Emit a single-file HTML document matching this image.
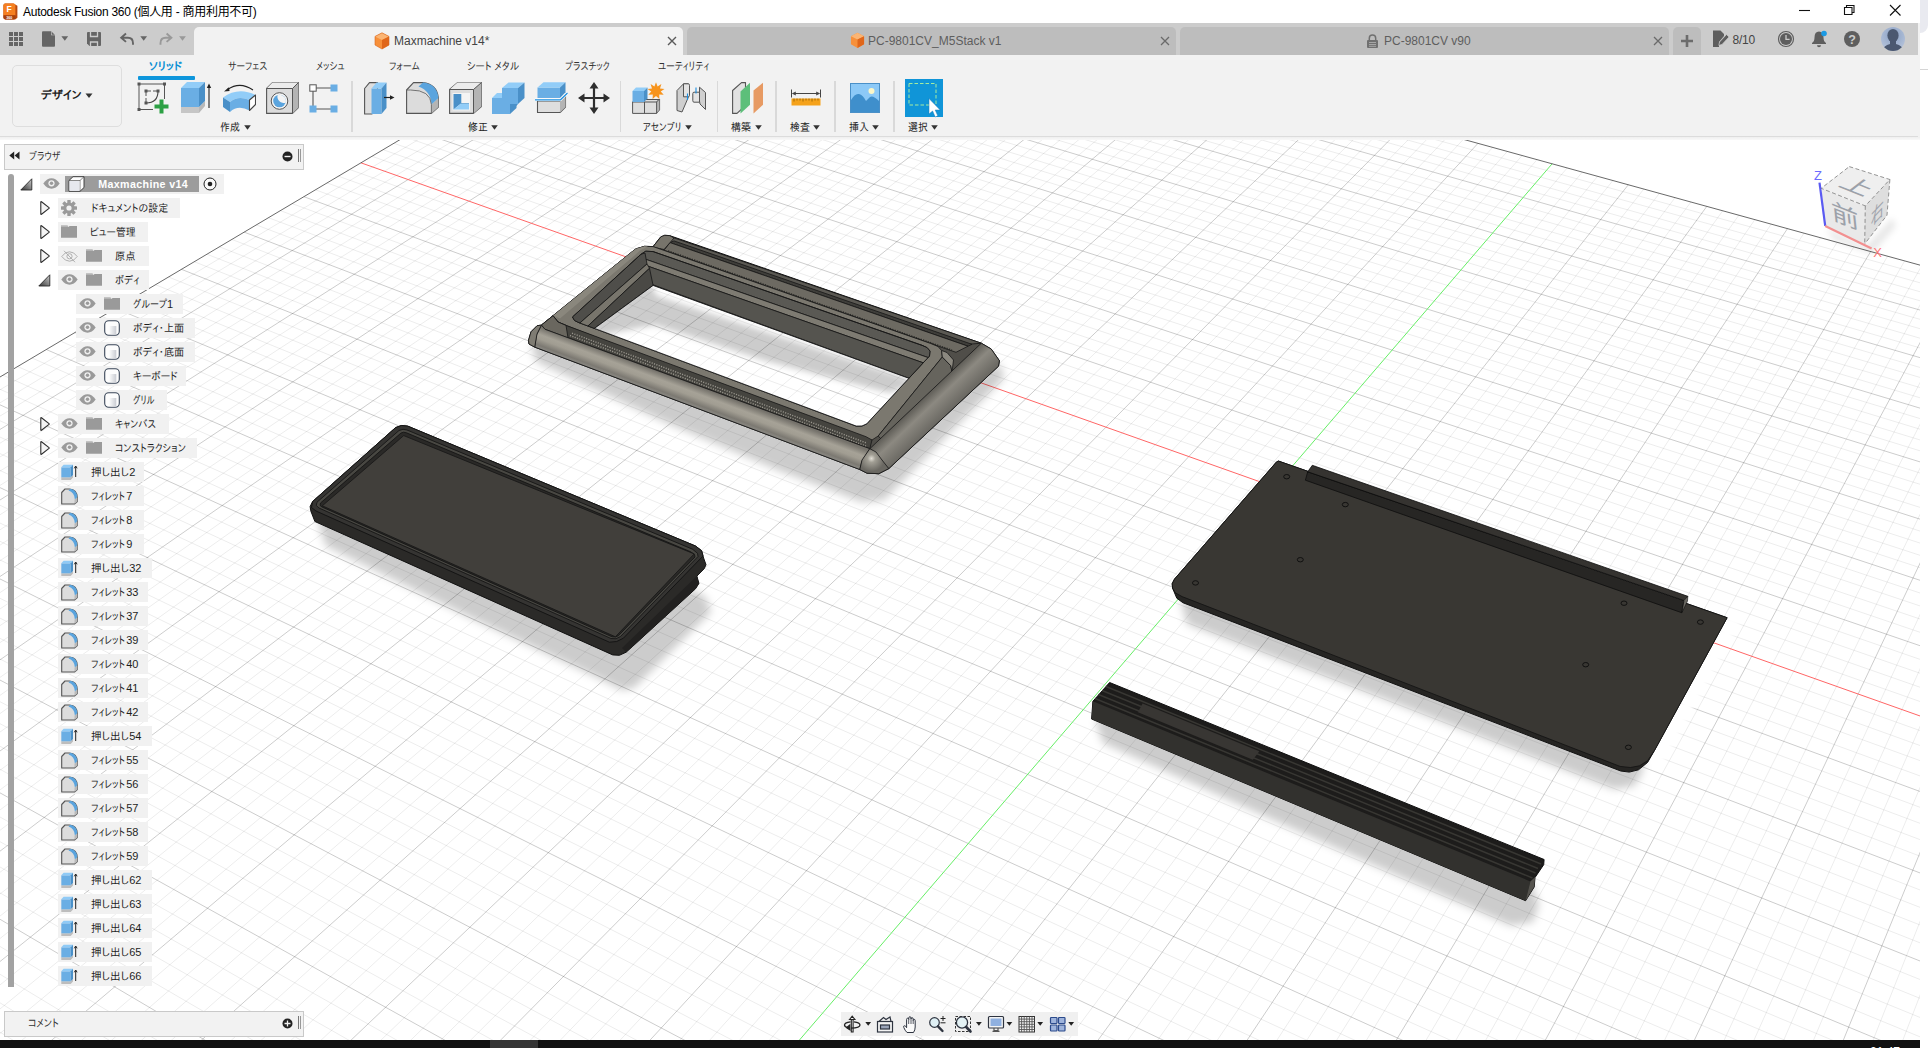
<!DOCTYPE html><html lang="ja"><head><meta charset="utf-8"><title>Autodesk Fusion 360</title><style>
html,body{margin:0;padding:0}
body{width:1928px;height:1048px;overflow:hidden;background:#fff;position:relative;font-family:"Liberation Sans","IPAPGothic","IPAGothic","Noto Sans CJK JP",sans-serif;font-size:12px;color:#222}
#vp{position:absolute;left:0;top:0}
.abs{position:absolute}
.tabt{font-size:12px;line-height:16px;white-space:nowrap;font-family:"Liberation Sans",sans-serif}
.jp{font-family:"Liberation Sans","IPAPGothic","IPAGothic","Noto Sans CJK JP",sans-serif;white-space:nowrap}
.rt{top:59px;font-size:12px;line-height:14px;color:#333;letter-spacing:-.8px}
.sep{top:81px;width:1.500px;height:51px;background:#d9d9d9}
.gl{top:119px;font-size:12px;line-height:14px;color:#222;letter-spacing:-.2px}
.gl i{display:inline-block;width:0;height:0;border-left:3.500px solid transparent;border-right:3.500px solid transparent;border-top:4.500px solid #333;margin-left:3px;vertical-align:2px}
.k{display:inline-block;transform-origin:0 50%;white-space:pre}
.rb{height:19.600px;background:#f1f1f1}
.jt{overflow:visible;font-family:"Liberation Sans","IPAPGothic","IPAGothic","Noto Sans CJK JP",sans-serif}

</style></head><body>
<svg id="vp" width="1920" height="1048" viewBox="0 0 1920 1048">
<defs>
<filter id="blur6" x="-10%" y="-20%" width="120%" height="140%"><feGaussianBlur stdDeviation="5"/></filter>
<filter id="blur4" x="-10%" y="-20%" width="120%" height="140%"><feGaussianBlur stdDeviation="4"/></filter>
<filter id="blur2" x="-20%" y="-20%" width="140%" height="140%"><feGaussianBlur stdDeviation="3"/></filter>
<filter id="blur2s" x="-30%" y="-10%" width="160%" height="120%"><feGaussianBlur stdDeviation="2"/></filter>
</defs>

<g id="gridg"><path d="M748.3 -57.7L-635.6 769.9M759.2 -54.7L-623 778.3M770.1 -51.7L-610.2 786.7M792.1 -45.6L-584.4 803.8M803.1 -42.6L-571.4 812.4M814.3 -39.5L-558.2 821.1M825.4 -36.4L-544.9 829.9M847.9 -30.2L-518 847.7M859.3 -27.1L-504.4 856.7M870.7 -24L-490.6 865.8M882.1 -20.8L-476.8 875M905.2 -14.4L-448.7 893.5M916.8 -11.2L-434.5 902.9M928.5 -8L-420.2 912.4M940.3 -4.8L-405.8 922M963.9 1.7L-376.5 941.3M975.8 5L-361.6 951.2M987.8 8.3L-346.7 961.1M999.9 11.6L-331.6 971M1024.1 18.3L-301 991.3M1036.4 21.7L-285.5 1001.5M1048.6 25.1L-269.8 1011.9M1061 28.5L-254.1 1022.3M1085.9 35.3L-222.1 1043.5M1098.4 38.8L-205.8 1054.2M1111 42.3L-189.5 1065.1M1123.7 45.7L-173 1076M1149.3 52.8L-139.5 1098.1M1162.1 56.3L-122.5 1109.4M1175.1 59.9L-105.3 1120.7M1188.1 63.5L-88 1132.2M1214.3 70.7L-52.9 1155.4M1227.5 74.3L-35.1 1167.2M1240.8 78L-17.1 1179.1M1254.2 81.7L1 1191.1M1281.1 89.1L37.9 1215.5M1294.7 92.8L56.6 1227.8M1308.3 96.6L75.4 1240.3M1322 100.4L94.5 1252.9M1349.7 108L133.2 1278.5M1363.6 111.8L152.8 1291.5M1377.7 115.7L172.7 1304.6M1391.8 119.6L192.7 1317.9M1420.2 127.4L233.4 1344.8M1434.5 131.4L254.1 1358.5M1448.9 135.3L275 1372.3M1463.4 139.3L296.1 1386.3M1492.7 147.4L338.9 1414.6M1507.4 151.4L360.7 1429M1522.2 155.5L382.7 1443.6M1537.1 159.6L405 1458.3M1567.2 167.9L450.2 1488.2M1582.3 172.1L473.1 1503.4M1597.6 176.3L496.4 1518.8M1612.9 180.5L519.8 1534.3M1643.8 189L567.6 1565.9M1659.4 193.3L591.9 1582M1675.1 197.6L616.4 1598.2M1690.9 202L641.2 1614.6M1722.7 210.8L691.8 1648.1M1738.8 215.2L717.4 1665.1M1754.9 219.6L743.4 1682.2M1771.2 224.1L769.7 1699.6M1804 233.1L823.2 1735M1820.5 237.7L850.5 1753.1M1837.1 242.3L878 1771.3M1853.9 246.9L905.9 1789.7M1887.6 256.2L962.7 1827.3M1904.7 260.9L991.6 1846.4M1921.8 265.6L1020.9 1865.8M1939.1 270.4L1050.5 1885.4M1973.9 279.9L1110.9 1925.4M1991.4 284.8L1141.7 1945.7M2009.1 289.6L1172.8 1966.3M2026.9 294.5L1204.4 1987.2M2062.8 304.4L1268.7 2029.8M2080.9 309.4L1301.5 2051.5M2099.1 314.4L1334.7 2073.4M2117.4 319.5L1368.4 2095.7M2154.4 329.7L1437.1 2141.1M2173.1 334.8L1472.1 2164.3M2191.9 340L1507.6 2187.8M2210.9 345.2L1543.6 2211.6M2249.1 355.8L1617.1 2260.2M2268.4 361.1L1654.6 2285M729.5 -55.9L2265.6 369.6M721.5 -51.1L2262.9 378.3M713.4 -46.3L2260.1 387M705.2 -41.5L2257.3 395.8M688.6 -31.6L2251.5 413.8M680.3 -26.7L2248.6 422.9M671.8 -21.7L2245.7 432.1M663.3 -16.6L2242.7 441.5M646.1 -6.4L2236.7 460.4M637.4 -1.2L2233.6 470M628.6 4L2230.5 479.8M619.7 9.2L2227.3 489.6M601.8 19.9L2221 509.6M592.7 25.3L2217.7 519.8M583.6 30.7L2214.4 530.1M574.3 36.2L2211.1 540.5M555.6 47.3L2204.3 561.7M546.2 52.9L2200.9 572.5M536.6 58.6L2197.4 583.4M527 64.3L2193.9 594.5M507.5 75.9L2186.7 617M497.6 81.7L2183.1 628.4M487.6 87.6L2179.4 640M477.6 93.6L2175.6 651.7M457.2 105.7L2168 675.6M446.9 111.8L2164.1 687.8M436.5 118L2160.2 700.1M426 124.2L2156.2 712.6M404.7 136.9L2148.1 738M393.9 143.3L2144 751M383 149.7L2139.8 764.1M372 156.3L2135.5 777.4M349.7 169.5L2126.9 804.5M338.4 176.2L2122.5 818.4M327 182.9L2118 832.4M315.5 189.8L2113.5 846.6M292.2 203.6L2104.2 875.6M280.3 210.6L2099.5 890.4M268.4 217.7L2094.7 905.4M256.3 224.9L2089.9 920.6M231.8 239.4L2080 951.6M219.4 246.8L2074.9 967.5M206.9 254.2L2069.8 983.6M194.2 261.7L2064.6 999.9M168.5 277L2053.9 1033.2M155.5 284.7L2048.5 1050.3M142.3 292.5L2043 1067.6M129 300.4L2037.4 1085.1M102 316.5L2025.9 1121.1M88.3 324.6L2020 1139.4M74.4 332.8L2014.1 1158.1M60.4 341.1L2008.1 1177M32 358L1995.7 1215.8M17.6 366.5L1989.3 1235.7M3 375.2L1982.9 1255.8M-11.7 384L1976.4 1276.3M-41.7 401.7L1963 1318.3M-56.9 410.8L1956.1 1339.9M-72.3 419.9L1949.1 1361.8M-87.9 429.1L1942 1384M-119.5 447.9L1927.5 1429.7M-135.5 457.4L1920 1453.1M-151.8 467L1912.4 1476.9M-168.2 476.8L1904.6 1501.2M-201.6 496.6L1888.8 1551M-218.6 506.7L1880.6 1576.5M-235.8 516.9L1872.3 1602.6M-253.2 527.2L1863.8 1629.1M-288.6 548.2L1846.4 1683.6M-306.5 558.9L1837.5 1711.6M-324.8 569.7L1828.4 1740.2M-343.2 580.6L1819.1 1769.3M-380.7 602.9L1800 1829.3M-399.8 614.2L1790.1 1860.2M-419.1 625.7L1780.1 1891.7M-438.7 637.3L1769.8 1923.8M-478.5 660.9L1748.7 1990.1M-498.8 672.9L1737.8 2024.3M-519.3 685.1L1726.6 2059.2M-540.1 697.5L1715.3 2094.8M-582.5 722.6L1691.8 2168.4M-604.1 735.5L1679.7 2206.4M-626 748.4L1667.3 2245.3M-648.2 761.6L1654.6 2285" stroke="#000" stroke-opacity=".075" stroke-width="1" fill="none"/>
<path d="M781 -48.7L-597.4 795.2M836.7 -33.3L-531.5 838.8M893.6 -17.6L-462.8 884.2M952.1 -1.5L-391.2 931.6M1012 15L-316.4 981.1M1073.4 31.9L-238.1 1032.9M1136.4 49.3L-156.3 1087M1201.1 67.1L-70.6 1143.7M1267.6 85.4L19.4 1203.2M1335.8 104.2L113.7 1265.7M1405.9 123.5L213 1331.3M1478 143.3L317.4 1400.4M1628.3 184.8L543.6 1550M1706.8 206.4L666.4 1631.3M1787.5 228.6L796.3 1717.2M1870.7 251.5L934.1 1808.4M1956.4 275.1L1080.5 1905.3M2044.8 299.5L1236.3 2008.3M2135.9 324.6L1402.5 2118.3M2229.9 350.5L1580.1 2235.8M696.9 -36.6L2254.4 404.8M654.7 -11.5L2239.7 450.9M610.8 14.5L2224.2 499.6M565 41.7L2207.7 551.1M517.3 70L2190.3 605.7M467.4 99.6L2171.8 663.6M415.4 130.5L2152.2 725.2M303.9 196.7L2108.9 861M244.1 232.1L2084.9 936M181.4 269.3L2059.3 1016.4M115.6 308.4L2031.7 1103M46.3 349.5L2001.9 1196.3M-26.6 392.8L1969.7 1297.2M-103.6 438.4L1934.8 1406.6M-184.8 486.7L1896.8 1525.8M-270.8 537.6L1855.2 1656.1M-361.8 591.7L1809.6 1799M-458.4 649L1759.3 1956.6M-561.2 710L1703.7 2131.2" stroke="#000" stroke-opacity=".2" stroke-width="1" fill="none"/>
<g filter="url(#blur2s)"><polygon points="1729,617 1740,622 1660,768 1646,764" fill="#fff"/></g>
<path d="M360.9 162.8L2131.2 790.9" stroke="#f66" stroke-width="1" fill="none"/>
<path d="M1552.1 163.8L427.4 1473.2" stroke="#6e6" stroke-width="1" fill="none"/>
<path d="M737.5 -60.6L-648.2 761.6M737.5 -60.6L2268.4 361.1" stroke="#444" stroke-opacity=".8" stroke-width="1" fill="none"/></g>
<g filter="url(#blur4)" fill="#000" fill-opacity=".2"><polygon points="560,330 531,346 537,362 668,423.5 780,471 862,502 884,500 1004,378 1000,364 960,380 880,450"/></g>
<polygon points="528.5,340.4 531,331.8 537.1,325.7 541.4,325.1 630.5,253 636,248.8 644.6,246.3 653.1,246.6 660.4,237.2 664.7,235.3 669.6,235.6 981.3,343.2 991.2,349 999.4,360.7 998.5,366.2 888.8,468.6 878.8,473.7 867,473.2 859.8,469.5 534.7,347.1 529,344" fill="#504e49" stroke="#111" stroke-width="1" />
<polygon points="668,235.8 981.3,343.2 940,346.7 655.3,247.2" fill="#5b5953" stroke="#161616" stroke-width="0.8" />
<polygon points="674,240.9 972,344.3 968,346.2 670,242.6" fill="#3f3e3a" stroke="#161616" stroke-width="0.8" />
<polygon points="670,242.6 968,346.2 956,352.3 664,250.2" fill="#6d6a62" stroke="#161616" stroke-width="0.8" />
<path d="M668 251L952 350.3" stroke="#2a2a27" stroke-width="1.6" stroke-dasharray="1.3 1.2" fill="none"/>
<polygon points="661,236.7 664.7,235.3 669.6,235.6 674,238 664,249.5 655.3,247.6 653.1,246.6" fill="#77746b" stroke="#161616" stroke-width="0.8" />
<path d="M553 315.7 L630.5 253 L636 248.8 L644.6 246.3 L653.1 246.6 L930.5 343.4 L938 346.5 L941.6 350.5 L942.3 357 L878.2 436 L872 440 L862 440.8 L566 325.4 L558 322Z M572.5 317 L640.9 254.3 L645.8 251.2 L653.1 251.6 L922 345.3 L927 347.6 L930 351 L929.5 356 L866.8 423.8 L862 426 L856.2 426.1 L579 322.7 L574.5 320.5Z" fill="#7b786f" fill-rule="evenodd" stroke="#161616" stroke-width=".8"/>
<polygon points="553,315.7 630.5,253 636,248.8 644.6,246.3 648,246.4 640,250.5 634,256 560,318.5" fill="#8a877d" stroke="none" stroke-width="0.8" />
<clipPath id="r1clip"><polygon points="572.5,317 640.9,254.3 645.8,251.2 653.1,251.6 922,345.3 927,347.6 930,351 929.5,356 866.8,423.8 862,426 856.2,426.1 579,322.7 574.5,320.5"/></clipPath>
<g clip-path="url(#r1clip)">
<rect x="560" y="240" width="400" height="200" fill="#4a4945"/>
<polygon points="636,245.5 940,351.6 940,361.7 640,257.3" fill="#5a5954" stroke="#161616" stroke-width="0.8" />
<polygon points="640,257.3 940,361.7 940,368.7 642,264.1" fill="#7e7b72" stroke="#161616" stroke-width="0.8" />
<polygon points="642,264.1 940,368.7 940,389.6 650,283.7" fill="#55544f" stroke="#161616" stroke-width="0.8" />
<polygon points="558.8,328.2 640.9,254.3 645,253 647,264 567.8,333.6" fill="#4f4e4a" stroke="#161616" stroke-width="0.8" />
<polygon points="567.8,333.6 647,264 649.5,268.3 577.6,335.7" fill="#78756c" stroke="#161616" stroke-width="0.8" />
<polygon points="577.6,335.7 649.5,268.3 653.1,285.4 584.2,335.9" fill="#4a4945" stroke="#161616" stroke-width="0.8" />
<clipPath id="holeclip"><polygon points="653.1,285.4 940,389.6 940,440 560,440 584.2,335.9"/></clipPath>
<g clip-path="url(#holeclip)"><rect x="560" y="260" width="400" height="200" fill="#fff"/><use href="#gridg"/><g filter="url(#blur2)"><polygon points="650,284 657,296 905,378 912,384 890,393 766,361 655,325 600,335 590,326" fill="#000" fill-opacity=".2"/></g></g>
<path d="M584.2 335.9L653.1 285.4L940 389.6" fill="none" stroke="#161616" stroke-width=".9"/>
</g>
<polygon points="572.5,317 640.9,254.3 645.8,251.2 653.1,251.6 922,345.3 927,347.6 930,351 929.5,356 866.8,423.8 862,426 856.2,426.1 579,322.7 574.5,320.5" fill="none" stroke="#161616" stroke-width=".9"/>
<polygon points="541.4,325.1 553,315.7 558,322 566,325.4 866,436.7 872,440 869.8,448.7 545,329.3" fill="#45443f" stroke="#161616" stroke-width="0.8" />
<path d="M572 333.2L866 442.8 M570 335.5L866 446" stroke="#9a978e" stroke-width="1.4" stroke-dasharray="1.1 1.4" fill="none"/>
<defs><linearGradient id="cyl" gradientUnits="userSpaceOnUse" x1="640" y1="364.8" x2="631.4" y2="387.7"><stop offset="0" stop-color="#75726b"/><stop offset=".28" stop-color="#a6a297"/><stop offset=".45" stop-color="#a19d92"/><stop offset=".7" stop-color="#7c7972"/><stop offset=".88" stop-color="#8f8e89"/><stop offset="1" stop-color="#6c6b67"/></linearGradient><linearGradient id="slope" gradientUnits="userSpaceOnUse" x1="925" y1="396" x2="944" y2="416"><stop offset="0" stop-color="#5d5b55"/><stop offset=".4" stop-color="#8c8981"/><stop offset="1" stop-color="#6b6963"/></linearGradient><radialGradient id="ball" gradientUnits="userSpaceOnUse" cx="871.5" cy="458.5" r="13"><stop offset="0" stop-color="#e2dfd6"/><stop offset=".3" stop-color="#a29f95"/><stop offset="1" stop-color="#6a6862"/></radialGradient></defs>
<polygon points="541.4,325.1 553,315.7 558,322 566,325.4 568,337.9 545,329.3" fill="#6a675f" stroke="#161616" stroke-width="0.8" />
<polygon points="541.4,325.1 545,329.3 869.8,448.7 862,461 859.8,469.5 534.7,347.1 536.5,335" fill="url(#cyl)" stroke="#161616" stroke-width="0.8" />
<polygon points="528.5,340.4 531,331.8 537.1,325.7 541.4,325.1 537,334 534.7,347.1 529,344" fill="#7f7c73" stroke="#161616" stroke-width="0.8" />
<polygon points="942.3,357 950.8,365.8 952,372 884,442 878.2,436" fill="#66645d" stroke="#161616" stroke-width="0.8" />
<polygon points="941.6,350.5 947,352.5 953.5,360 952,372 950.8,365.8 942.3,357" fill="#8c8980" stroke="#161616" stroke-width="0.8" />
<polygon points="981.3,343.2 991.2,349 999.4,360.7 998.5,366.2 888.8,468.6 880,462 874,452 869.8,448.7" fill="url(#slope)" stroke="#161616" stroke-width="0.8" />
<polygon points="869.8,448.7 876,452 882,460 888.8,468.6 878.8,473.7 867,473.2 859.8,469.5 862,460" fill="url(#ball)" stroke="#161616" stroke-width="0.8" />
<!-- TRAY shadow -->
<g filter="url(#blur4)" fill="#000" fill-opacity=".2"><polygon points="340,500 318,522 326,546 467,616 594,676 622,690 634,688 711,612 706,598 694,590 640,600"/></g>
<!-- TRAY -->
<path d="M395.6 427.6 L401.4 425.5 L407.7 426.1 L695.5 546 L701.6 550.7 L703.6 558 L706 564.7 L704.2 568.7 L696.9 576.1 L698.9 583.4 L695.5 588.8 L632.8 646.2 L626.1 652.2 L619.4 655.3 L612.7 654.9 L314.9 521.5 L310.9 511.2 L310.1 506.6 L312.6 501.5Z" fill="#2b2a28" stroke="#111" stroke-width="1"/>
<path d="M696.9 576.1 L698.9 583.4 L695.5 588.8 L632.8 646.2 L626.1 652.2 L622 648 Z" fill="#222120"/>
<!-- rim top -->
<path d="M395.6 427.6 L401.4 425.5 L407.7 426.1 L695.5 546 L701.6 550.7 L703 556 L623.4 638.2 L616.7 641.5 L609.4 642.2 L316 511 L311.5 507.5 L312.6 501.5Z" fill="#353432" stroke="#121212" stroke-width=".9"/>
<path d="M399 430.5 L403 429.3 L407 430 L692.5 549.2 L697.5 553.3 L698 556.5 L620.5 636.5 L616 638.7 L611 638.5 L319 508 L316.3 505.5 L317 502.2Z" fill="#484742" stroke="#121212" stroke-width=".8"/>
<path d="M401 433 L403.6 432.2 L406.5 432.8 L690.5 551.7 L694.6 554.6 L695 557 L618.5 635.6 L615.6 637 L612 636.8 L322 507 L320 505.4 L320.5 503Z" fill="#2a2927" stroke="#121212" stroke-width=".8"/>
<path d="M403.7 435.6 L694.2 553.9 L615.4 636.8 L322.3 505.8Z" fill="#413f3b" stroke="#151515" stroke-width=".8"/>

<!-- PLATE shadows -->
<g filter="url(#blur4)" fill="#000" fill-opacity=".2"><polygon points="1200,590 1181,602 1187,624 1250,648.5 1384,699 1584,777.5 1614,789 1634,786 1643,771 1640,740"/></g>
<g filter="url(#blur4)" fill="#000" fill-opacity=".2"><polygon points="1112,700 1096,722 1103,743 1251.5,810 1407,880 1511,925.500 1533,922 1539,904 1530,880"/></g>
<!-- PLATE -->
<path d="M1276.4 462.1 L1278.3 461 L1727.1 617.7 L1654.5 750.4 L1647.6 762.4 L1638.5 769.8 L1629.3 772.1 L1620.7 771 L1182.9 602.7 L1176.8 598.2 L1172.6 588.2 L1172.2 583.7 L1174.5 579.1Z" fill="#262523" stroke="#111" stroke-width="1"/>
<path d="M1276.4 462.1 L1278.3 461 L1727.1 617.7 L1654.5 750.4 L1647.6 760.7 L1639.6 765.8 L1630.4 767.5 L1620.1 766.4 L1182.1 596.6 L1175.3 592.8 L1172.6 588.2 L1172.2 583.7 L1174.5 579.1Z" fill="#393733" stroke="#111" stroke-width=".8"/>
<g fill="none" stroke="#0c0c0c" stroke-width=".9">
<ellipse cx="1286.7" cy="476.7" rx="3" ry="2.2"/><ellipse cx="1345.3" cy="504.6" rx="3" ry="2.2"/><ellipse cx="1300.3" cy="559.7" rx="3" ry="2.2"/>
<ellipse cx="1195.5" cy="582.9" rx="3" ry="2.2"/><ellipse cx="1624" cy="603.2" rx="3" ry="2.2"/><ellipse cx="1700.4" cy="622.1" rx="3" ry="2.2"/>
<ellipse cx="1585.7" cy="664.7" rx="3" ry="2.2"/><ellipse cx="1628.4" cy="747.3" rx="3" ry="2.2"/>
</g>
<!-- ridge on plate -->
<path d="M1307.7 471.8 L1305.4 480.2 L1681.7 612.7 L1684 600.5Z" fill="#272624" stroke="#0e0e0e" stroke-width=".8"/>
<path d="M1312.3 465.3 L1307.7 471.8 L1684 600.5 L1687.8 596.3Z" fill="#353330" stroke="#0e0e0e" stroke-width=".8"/>
<path d="M1684 600.5 L1687.8 596.3 L1687.5 601 L1682 612.5Z" fill="#6a6862" stroke="#0e0e0e" stroke-width=".6"/>
<!-- LONG BAR -->
<path d="M1109.6 682.5 L1544.1 859.5 L1543.7 864.7 L1535 877.5 L1534.2 887 L1525.6 900.7 L1091.6 719 L1092.9 701.3Z" fill="#1d1c1b" stroke="#0e0e0e" stroke-width="1"/>
<path d="M1092.9 701.3 L1530.4 881.4 L1525.6 900.7 L1091.6 719Z" fill="#32312e"/>
<path d="M1530.4 881.4 L1535.1 877.1 L1534.2 886.5 L1525.6 900.7Z" fill="#55534e"/>
<g stroke="#383733" stroke-width="1.5" fill="none">
<path d="M1106 686.5 L1541 864"/><path d="M1102 690.5 L1538 868.5"/><path d="M1098.5 694.5 L1535.5 873"/><path d="M1095 698.5 L1532.5 878"/>
</g>
<path d="M1142.6 703.5 L1259.3 751.3 L1252.8 759.8 L1138 712.2Z" fill="#383633"/>

<!-- view cube -->
<g filter="url(#blur2)"><path d="M1826 228 L1866 246 L1892 218 L1896 226 L1872 254 L1834 240Z" fill="#000" fill-opacity=".09"/></g>
<path d="M1849.300 166.600 L1889.900 179.500 L1865.300 205.900 L1821.200 188.300Z" fill="#efefef"/>
<path d="M1821.200 188.300 L1865.300 205.900 L1864.700 243.900 L1825.200 226.100Z" fill="#e9e9e9"/>
<path d="M1865.300 205.900 L1889.900 179.500 L1887 215.200 L1864.700 243.900Z" fill="#dedede"/>
<g fill="none" stroke="#6a6a6a" stroke-width=".7" stroke-dasharray="4 2.500"><path d="M1849.300 166.600 L1889.900 179.500 L1865.300 205.900 L1821.200 188.300Z"/><path d="M1865.300 205.900 L1864.700 243.900"/><path d="M1889.900 179.500 L1887 215.200 L1864.700 243.900"/></g>
<g font-family="Liberation Sans,'Noto Sans CJK JP',sans-serif" fill="#9ca1a9" text-anchor="middle">
<text transform="matrix(2.205 .88 -1.405 1.085 1849.300 166.600)" x="10" y="14.500" font-size="12.5">上</text>
<text transform="matrix(2.205 .88 .2 1.890 1821.200 188.300)" x="10" y="14.500" font-size="12.500">前</text>
<text transform="matrix(1.230 -1.320 -.03 1.900 1865.300 205.900)" x="10" y="14.500" font-size="10.500" fill="#a0a4ac">右</text>
</g>
<path d="M1819.500 182.600 L1825.200 225.800" stroke="#5a5af2" stroke-width="2.200" fill="none"/>
<path d="M1825.200 226 L1871.600 248.400" stroke="#f29090" stroke-width="2.200" fill="none"/>
<text x="1818" y="180.300" font-size="13" fill="#6b6bff" text-anchor="middle" font-family="Liberation Sans,sans-serif">Z</text>
<text x="1877.600" y="256.500" font-size="13" fill="#f77" text-anchor="middle" font-family="Liberation Sans,sans-serif">X</text>

</svg>
<div id="titlebar" class="abs" style="left:0;top:0;width:1920px;height:23px;background:#fff"></div>
<svg class="abs" style="left:3px;top:3px" width="15" height="17" viewBox="0 0 15 17"><path d="M2.2 0.6h8.2l4 2.2v12l-2.2 1.6H2.2Q.4 16.4.4 14.6V2.4Q.4.6 2.2.6z" fill="#b8490f"/><path d="M2.2.6h8.4Q12.4.6 12.4 2.4v10H.4V2.4Q.4.6 2.2.6z" fill="#f57f20"/><path d="M.4 12.2h12v2.6q0 1.6-1.8 1.6H2.2q-1.8 0-1.8-1.8z" fill="#a8400c"/><text x="6.2" y="9.3" font-size="8.5" font-weight="bold" fill="#fff" text-anchor="middle" font-family="Liberation Sans,sans-serif">F</text><text x="6.3" y="15.6" font-size="3.6" font-weight="bold" fill="#fff" text-anchor="middle" font-family="Liberation Sans,sans-serif">360</text></svg>
<div id="wtitle" class="abs" style="left:23px;top:3px;height:18px;line-height:18px;font-size:12px;letter-spacing:-.27px;color:#000;white-space:nowrap;font-family:'Liberation Sans','Noto Sans CJK JP',sans-serif">Autodesk Fusion 360 (個人用 - 商用利用不可)</div>
<svg class="abs" style="left:1790px;top:0" width="130" height="23" viewBox="0 0 130 23" fill="none" stroke="#111" stroke-width="1.1"><path d="M9 10.5h11"/><path d="M54.5 7.5h7.5v7h-7.5zM56.5 7.5v-2h7.5v7h-2"/><path d="M100 5l10.5 10.5M110.500 5L100 15.500"/></svg>
<div id="tabbar" class="abs" style="left:0;top:23px;width:1918px;height:32px;background:#ccc"></div>
<div class="abs" style="left:1918px;top:23px;width:2px;height:116px;background:#f2f2f2"></div>
<!-- quick access icons -->
<svg class="abs" style="left:0;top:23px" width="194" height="32" viewBox="0 0 194 32">
<g fill="#656565">
<path d="M9 9h4v4H9zM14 9h4v4h-4zM19 9h4v4h-4zM9 14h4v4H9zM14 14h4v4h-4zM19 14h4v4h-4zM9 19h4v4H9zM14 19h4v4h-4zM19 19h4v4h-4z"/>
<path d="M43 8.200h8l4 4v10.500q0 1-1 1H43q-1 0-1-1V9.200q0-1 1-1z"/>
<path d="M61.400 13.200h6.800l-3.400 4.600z"/>
<path d="M88 9h12q1 0 1 1v12q0 1-1 1H89.500L87 20.500V10q0-1 1-1z"/>
<path d="M140.300 13.200h6.800l-3.400 4.600z"/>
</g>
<path d="M51 8.200v4h4z" fill="#ccc"/><path d="M51.600 8.800l3 3h-3z" fill="#656565"/>
<path d="M90.500 9v4.500h7V9M90.500 23v-4h7v4" fill="none" stroke="#ccc" stroke-width="1.3"/>
<path d="M126 10.500l-4.800 4.200 4.800 4.200M121.500 14.700h6.500q5 0 5 5.500v1.500" fill="none" stroke="#656565" stroke-width="1.9"/>
<path d="M166.600 10.500l4.800 4.200-4.800 4.200M171 14.700h-5.500q-5 0-5 5.500v1.500" fill="none" stroke="#999" stroke-width="1.9"/>
<path d="M179.100 13.200h6.800l-3.400 4.600z" fill="#999"/>
</svg>
<!-- tabs -->
<div class="abs" style="left:194px;top:27px;width:489px;height:28px;background:#f2f2f2;border-radius:5px 5px 0 0"></div>
<div class="abs" style="left:687px;top:27px;width:489px;height:28px;background:#bdbdbd;border-radius:5px 5px 0 0"></div>
<div class="abs" style="left:1180px;top:27px;width:489px;height:28px;background:#bdbdbd;border-radius:5px 5px 0 0"></div>
<div class="abs" style="left:1673px;top:27px;width:28px;height:28px;background:#bdbdbd;border-radius:5px 5px 0 0"></div>
<svg class="abs" style="left:374px;top:32px" width="16" height="18" viewBox="0 0 16 18"><path d="M8 .8l7 3.600v8.600l-7 4-7-4V4.400z" fill="#f7903a"/><path d="M8 .8l7 3.600-7 3.600-7-3.600z" fill="#fbb574"/><path d="M8 8v9l7-4V4.400z" fill="#e0661a"/><path d="M8 .8l7 3.600v8.600l-7 4-7-4V4.400z" fill="none" stroke="#d9641c" stroke-width=".6"/></svg>
<div class="abs tabt" style="left:394px;top:33px;color:#444">Maxmachine v14*</div>
<svg class="abs" style="left:667px;top:36px" width="10" height="10" viewBox="0 0 10 10"><path d="M1 1l8 8M9 1L1 9" stroke="#5a5a5a" stroke-width="1.4"/></svg>
<svg class="abs" style="left:850px;top:32px" width="15" height="17" viewBox="0 0 16 18"><path d="M8 .8l7 3.600v8.600l-7 4-7-4V4.400z" fill="#f7903a"/><path d="M8 .8l7 3.600-7 3.600-7-3.600z" fill="#fbb574"/><path d="M8 8v9l7-4V4.400z" fill="#e0661a"/></svg>
<div class="abs tabt" style="left:868px;top:33px;color:#5e5e5e">PC-9801CV_M5Stack v1</div>
<svg class="abs" style="left:1160px;top:36px" width="10" height="10" viewBox="0 0 10 10"><path d="M1 1l8 8M9 1L1 9" stroke="#6a6a6a" stroke-width="1.3"/></svg>
<svg class="abs" style="left:1366px;top:34px" width="13" height="15" viewBox="0 0 13 15"><path d="M3.300 6V4.200a3.200 3.200 0 016.400 0V6" fill="none" stroke="#707070" stroke-width="1.500"/><rect x="1" y="6" width="11" height="8" rx="1" fill="#707070"/><path d="M3 8.500h7M3 10.500h7M3 12.300h7" stroke="#bdbdbd" stroke-width=".7"/></svg>
<div class="abs tabt" style="left:1384px;top:33px;color:#5e5e5e">PC-9801CV v90</div>
<svg class="abs" style="left:1653px;top:36px" width="10" height="10" viewBox="0 0 10 10"><path d="M1 1l8 8M9 1L1 9" stroke="#6a6a6a" stroke-width="1.3"/></svg>
<svg class="abs" style="left:1679px;top:33px" width="16" height="16" viewBox="0 0 16 16"><path d="M8 2v12M2 8h12" stroke="#6c6c6c" stroke-width="2.600"/></svg>
<!-- right status icons -->
<svg class="abs" style="left:1710px;top:27px" width="200" height="26" viewBox="0 0 200 26">
<path d="M3 3.500h7.500l3.500 3.500v2l-5 6v5H3z" fill="#5e5e5e"/><path d="M16.500 7.500l2.500 2.500-7 7.500-3.200.8.700-3.300z" fill="#5e5e5e" stroke="#ccc" stroke-width=".7"/>
<text x="22.500" y="16.800" font-size="12" fill="#444" font-family="Liberation Sans,sans-serif" letter-spacing="-.2">8/10</text>
<circle cx="76" cy="12" r="7.500" fill="none" stroke="#5e5e5e" stroke-width="1.200"/><circle cx="76" cy="12" r="6" fill="#5e5e5e"/><path d="M76 8v4.300h3.600" fill="none" stroke="#ccc" stroke-width="1.300"/>
<path d="M109 4.500q4.500 0 4.500 6 0 4 2.500 5.500v1h-14v-1q2.500-1.500 2.500-5.500 0-6 4.500-6zM107 18.300h4q0 2-2 2t-2-2z" fill="#5e5e5e"/><circle cx="114" cy="6.500" r="2.800" fill="#1b9ae4"/>
<circle cx="142" cy="12" r="8" fill="#5e5e5e"/><text x="142" y="16.500" font-size="12.500" font-weight="bold" fill="#ccc" text-anchor="middle" font-family="Liberation Sans,sans-serif">?</text>
<defs><radialGradient id="av" cx=".5" cy=".35" r=".7"><stop offset="0" stop-color="#8aa0c4"/><stop offset="1" stop-color="#b9c6dc"/></radialGradient><clipPath id="avc"><circle cx="183" cy="12" r="12"/></clipPath></defs>
<circle cx="183" cy="12" r="12" fill="url(#av)"/><g clip-path="url(#avc)" fill="#4b5870"><ellipse cx="183" cy="8.500" rx="5.600" ry="6.600"/><path d="M180 13h6v4q7 1.500 8 8h-22q1-6.500 8-8z"/></g>
</svg>
<!-- toolbar bg -->
<div id="toolbar" class="abs" style="left:0;top:55px;width:1918px;height:81px;background:#f2f2f2;border-bottom:1px solid #dcdcdc"></div>
<div class="abs" style="left:0;top:137px;width:1920px;height:3px;background:linear-gradient(#efefef,#f9f9f9)"></div>
<!-- right strip (other window) -->
<div class="abs" style="left:1920px;top:0;width:8px;height:1048px;background:#fff"></div>
<div class="abs" style="left:1920px;top:0;width:8px;height:33px;background:#e9eaf0;border-radius:0 0 8px 0"></div>
<div class="abs" style="left:1920px;top:69px;width:8px;height:1px;background:#d5d5d5"></div>

<!-- workspace button -->
<div class="abs" style="left:12px;top:65px;width:108px;height:60px;border:1px solid #dedede;border-radius:5px;box-sizing:content-box;background:#f2f2f2"></div>
<!-- ribbon tabs -->
<div class="abs" style="left:138px;top:76px;width:57px;height:3.500px;background:#0e96dc;border-radius:1px"></div>
<!-- separators -->
<div class="abs sep" style="left:351px"></div><div class="abs sep" style="left:619.500px"></div><div class="abs sep" style="left:716.500px"></div><div class="abs sep" style="left:775px"></div><div class="abs sep" style="left:834px"></div><div class="abs sep" style="left:893px"></div>
<!-- group labels -->

<!-- 1 sketch -->
<svg class="abs" style="left:136.500px;top:81.800px" width="33" height="33" viewBox="0 0 33 33"><g fill="none" stroke="#555" stroke-width="1"><path d="M2 2h25M2 2v25M27.500 2v15M2 27.500h14"/><path d="M9 9h12" stroke-dasharray="5 2"/><path d="M9 9v12"  stroke-dasharray="5 2"/><path d="M21 9q0 12-12 12" stroke="#444" stroke-width="1.100"/></g><g fill="#555"><rect x=".5" y=".5" width="3" height="3"/><rect x="26" y=".5" width="3" height="3"/><rect x=".5" y="26" width="3" height="3"/><rect x="7.500" y="7.500" width="3" height="3"/><rect x="19.500" y="7.500" width="3" height="3"/><rect x="7.500" y="19.500" width="3" height="3"/></g><path d="M24.500 17.500v14M17.500 24.500h14" stroke="#2ca044" stroke-width="4"/></svg>
<!-- 2 extrude -->
<svg class="abs" style="left:181px;top:82px" width="31" height="32" viewBox="0 0 31 32"><path d="M0 25h18l6-6v5l-6 7H0z" fill="#b9b9b9"/><path d="M0 25h18v6H0z" fill="#c6c6c6"/><path d="M0 6h18v19H0z" fill="#6aaee4"/><path d="M0 6l6-6h18l-6 6z" fill="#92cdf8"/><path d="M18 6l6-6v19l-6 6z" fill="#4a90c8"/><path d="M28 26V4" stroke="#222" stroke-width="1.100"/><path d="M28 1.500l2.200 4.500h-4.400z" fill="#222"/></svg>
<!-- 3 revolve -->
<svg class="abs" style="left:222.500px;top:83.500px" width="33" height="29" viewBox="0 0 33 29"><path d="M4.500 5.500Q17-3 30 6" fill="none" stroke="#222" stroke-width="1.100"/><path d="M1 7.500l4.800-4.300.8 3.800z" fill="#222"/><path d="M0 13.500Q15 2.500 32.500 11l-6 5Q15 11 7 18z" fill="#92cdf8"/><path d="M0 13.500l7 4.500v10l-7-5z" fill="#4a90c8"/><path d="M7 18q8-7 19.500-2v10.500Q15 20.500 7 28z" fill="#6aaee4"/><path d="M26.500 16l6-5v9.500l-6 6z" fill="#fff" stroke="#444" stroke-width="1.100" stroke-linejoin="round"/></svg>
<!-- 4 hole -->
<svg class="abs" style="left:265.500px;top:82px" width="33" height="32" viewBox="0 0 33 32"><path d="M.6 6.500L6.500.6H32.400V25.500L26.500 31.400H.6z" fill="#dcdcdc" stroke="#555" stroke-width="1.100" stroke-linejoin="round"/><path d="M.6 6.500L6.500.6H32.400L26.500 6.500z" fill="#ececec"/><path d="M26.500 6.500L32.400.6V25.500L26.500 31.400z" fill="#b4b4b4"/><path d="M.6 6.500h25.900v24.900M26.500 6.500l5.900-5.900" fill="none" stroke="#555" stroke-width="1"/><circle cx="13.500" cy="19" r="8.300" fill="#f4f4f4" stroke="#555" stroke-width="1"/><circle cx="13.500" cy="19" r="6.300" fill="#5aa4de"/><path d="M11.500 13.200a6.300 6.300 0 018.200 7.500A6.500 6.500 0 0111.500 13.200z" fill="#f4f4f4"/></svg>
<!-- 5 pattern -->
<svg class="abs" style="left:308.500px;top:83.800px" width="30" height="29" viewBox="0 0 30 29"><path d="M7 4h15M4 7v15M7 25h15" stroke="#555" stroke-width="1.100"/><rect x=".8" y=".8" width="6.400" height="6.400" fill="#fff" stroke="#555" stroke-width="1"/><rect x="21.500" y=".5" width="7" height="7" fill="#6aaee4"/><rect x=".5" y="21.500" width="7" height="7" fill="#6aaee4"/><rect x="21.500" y="21.500" width="7" height="7" fill="#6aaee4"/></svg>
<!-- 6 press pull -->
<svg class="abs" style="left:363.500px;top:82px" width="31" height="33" viewBox="0 0 31 33"><path d="M.6 6.500L5.500.6h8V26L8 32H.6z" fill="#dedede" stroke="#555" stroke-width="1.100" stroke-linejoin="round"/><path d="M7.500 6.500h10v25.500h-10z" fill="#6aaee4"/><path d="M7.500 6.500L12.500.6h10l-5 5.900z" fill="#92cdf8"/><path d="M17.500 6.500l5-5.900V26l-5 6z" fill="#4a90c8"/><path d="M20 15.500h8" stroke="#222" stroke-width="1.200"/><path d="M30.500 15.500l-4.500-2.300v4.600z" fill="#222"/></svg>
<!-- 7 fillet -->
<svg class="abs" style="left:405.500px;top:82px" width="33" height="33" viewBox="0 0 33 33"><path d="M.6 31.400V8L7.500.6h9Q31 2 32.400 16v9l-7 6.400z" fill="#dcdcdc" stroke="#555" stroke-width="1.100" stroke-linejoin="round"/><path d="M25.400 31.400l7-6.400v-9l-7 6.500z" fill="#b4b4b4"/><path d="M12.500 4.500L17 .6q14 1.400 15.400 15.400l-7 6.500Q25 9 12.500 4.500z" fill="#5aa4de"/><path d="M.6 8h4q20 0 20.800 14.500v8.900" fill="none" stroke="#666" stroke-width=".9"/></svg>
<!-- 8 shell -->
<svg class="abs" style="left:448.800px;top:82px" width="33" height="33" viewBox="0 0 33 33"><path d="M.6 7.500L8.500.6H32.400V24.500L24.500 31.400H.6z" fill="#dedede" stroke="#555" stroke-width="1.100" stroke-linejoin="round"/><path d="M.6 7.500L8.500.6H32.400L24.500 7.500z" fill="#ececec"/><path d="M24.500 7.500L32.400.6V24.500L24.500 31.400z" fill="#b4b4b4"/><path d="M.6 7.500h23.900v23.900M24.500 7.500L32.400.6" fill="none" stroke="#555" stroke-width="1"/><rect x="3.500" y="11" width="17.500" height="17.500" fill="#f4f4f4"/><path d="M4.500 12h7.500v9.500l-7.500 6z" fill="#4a90c8"/><path d="M12 21.500h8v6H4.500z" fill="#92cdf8"/><path d="M12 12v9.500h8" fill="none" stroke="#4a90c8" stroke-width=".6"/></svg>
<!-- 9 combine -->
<svg class="abs" style="left:491.500px;top:82px" width="33" height="33" viewBox="0 0 33 33"><path d="M10 6h16v16H10z" fill="#6aaee4"/><path d="M10 6l6.500-5.600h16L26 6z" fill="#92cdf8"/><path d="M26 6l6.500-5.600v15.600L26 22z" fill="#4a90c8"/><path d="M0 16h18v16H0z" fill="#6aaee4"/><path d="M0 16l5-5h5v5z" fill="#92cdf8"/><path d="M18 22h8l-8 9.500z" fill="#4a90c8"/><path d="M18 22v10l6.500-6V22z" fill="#4a90c8"/></svg>
<!-- 10 split -->
<svg class="abs" style="left:534.500px;top:82px" width="33" height="32" viewBox="0 0 33 32"><path d="M2.500 19h22.500l5.500-5v11l-5.500 5.500H2.500z" fill="#dedede" stroke="#555" stroke-width="1.100" stroke-linejoin="round"/><path d="M25 19l5.500-5v11L25 30.500z" fill="#b4b4b4"/><path d="M2.500 5.500h22.500v10.500H2.500z" fill="#6aaee4"/><path d="M2.500 5.500L8.500.3h22L25 5.500z" fill="#92cdf8"/><path d="M25 5.500L30.500.3v10L25 16z" fill="#4a90c8"/><path d="M0 17.800h25.500l7-6.800" fill="none" stroke="#fff" stroke-width="2.600"/><path d="M0 17.800h25.500l7-6.800" fill="none" stroke="#1b8ee0" stroke-width="1.200"/></svg>
<!-- 11 move -->
<svg class="abs" style="left:578px;top:82.200px" width="32" height="32" viewBox="0 0 32 32"><path d="M16 3v26M3 16h26" stroke="#2e2e2e" stroke-width="2.200"/><path d="M16 0l4.500 6.500h-9zM16 32l4.500-6.500h-9zM0 16l6.500-4.500v9zM32 16l-6.500-4.500v9z" fill="#2e2e2e"/></svg>
<!-- 12 new component -->
<svg class="abs" style="left:631.500px;top:82px" width="33" height="33" viewBox="0 0 33 33"><path d="M.6 20l2.500-2.500h24l-2.500 2.500v11.400H.6z" fill="#dedede" stroke="#555" stroke-width="1" stroke-linejoin="round"/><path d="M12.500 20v11.400M.6 20h24" stroke="#555" stroke-width="1" fill="none"/><path d="M24.600 20l3-3v11l-3 3.400z" fill="#b4b4b4" stroke="#555" stroke-width=".8"/><path d="M.5 9h11.500v11H.5z" fill="#6aaee4"/><path d="M.5 9L4 5.500h11.500L12 9z" fill="#92cdf8"/><path d="M12 9l3.500-3.500v11L12 20z" fill="#4a90c8"/><path d="M24 .3l1.600 4.200 3.800-2.400-1.400 4.300 4.500.6-3.800 2.500 3 3.300-4.500-.3.200 4.500-3.400-3-3.400 3 .2-4.500-4.500.3 3-3.300-3.800-2.500 4.500-.6-1.400-4.300 3.800 2.400z" fill="#f7941d"/></svg>
<!-- 13 joint -->
<svg class="abs" style="left:676px;top:83px" width="31" height="30" viewBox="0 0 31 30"><g fill="#cfcfcf" stroke="#555" stroke-width="1" stroke-linejoin="round"><path d="M1 7.500L7.500.8h4.800v13.500L6 29 1 27.500z"/><path d="M7.500.8h4.800q1.200 0 1.200 1.500v10q0 1.500-1.200 1.500H7.500z" fill="#e4e4e4"/><path d="M29.500 9.500L23.500 4.200v14L24 21l5.500 5.500z" /><path d="M18 9.200h5.500v10H18q-1.200 0-1.200-1.500v-7q0-1.500 1.200-1.500z" fill="#e4e4e4"/></g><path d="M11.500 10.500v6.500M20 4.500v6" stroke="#1b8ee0" stroke-width="1.100"/></svg>
<!-- 14 construct -->
<svg class="abs" style="left:731.500px;top:82px" width="32" height="32" viewBox="0 0 32 32"><path d="M.6 8.500L9.500.6h4v22.900L5 31.400H.6z" fill="#e2e2e2" stroke="#555" stroke-width="1.100" stroke-linejoin="round"/><path d="M8.500 9.500L18 .8v22L8.500 31.400z" fill="#5dbf7a"/><path d="M21.500 8.500L31 .8v22L21.500 31.400z" fill="#e79a63"/></svg>
<!-- 15 measure -->
<svg class="abs" style="left:791px;top:89px" width="30" height="18" viewBox="0 0 30 18"><path d="M.5.500v8M29.500.500v8M3 4.500h24" stroke="#444" stroke-width="1" fill="none"/><path d="M.8 4.500l4-2v4zM29.200 4.500l-4-2v4z" fill="#444"/><rect x=".5" y="9.500" width="29" height="7" fill="#f5a21b"/><path d="M3 9.500v3M6 9.500v2M9 9.500v2M12 9.500v3M15 9.500v2M18 9.500v2M21 9.500v3M24 9.500v2M27 9.500v2" stroke="#8a5a00" stroke-width=".8"/></svg>
<!-- 16 insert -->
<svg class="abs" style="left:849.800px;top:82.500px" width="30" height="30" viewBox="0 0 30 30"><rect x=".5" y=".5" width="29" height="29" fill="#8cc9f7" stroke="#4a90c8" stroke-width="1"/><path d="M1 17q4-7 8-6t7 7l4-4q3-2 9 4v11H1z" fill="#3f8fcc"/><circle cx="21.500" cy="8" r="3" fill="#fbf6c8"/></svg>
<!-- 17 select -->
<div class="abs" style="left:905px;top:79px;width:38px;height:38px;background:#1095d8"></div>
<svg class="abs" style="left:905px;top:79px" width="40" height="40" viewBox="0 0 40 40"><rect x="4" y="4.500" width="27" height="21.500" fill="none" stroke="#a5eca0" stroke-width="1" stroke-dasharray="3.500 2"/><path d="M24 19.500v15.500l3.600-3 2.600 6 2.600-1.200-2.600-5.800h5z" fill="#fff" stroke="#1a7ab5" stroke-width=".5"/></svg>
<!-- design arrow -->
<svg class="abs" style="left:84.500px;top:93px" width="8" height="6" viewBox="0 0 8 6"><path d="M.5.600h7L4 5z" fill="#333"/></svg>

<div class="abs" style="left:4px;top:144px;width:298px;height:24px;background:#f2f2f2;border:1px solid #c9c9c9;box-sizing:content-box"></div>
<svg class="abs" style="left:9px;top:151px" width="11" height="9" viewBox="0 0 11 9"><path d="M5.200.5v8L.3 4.500zM10.500.5v8L5.600 4.500z" fill="#222"/></svg>
<svg class="abs jt" style="left:28.8px;top:148.7px" width="33" height="14" font-size="11" fill="#333"><text x="0" y="11" textLength="31.4" lengthAdjust="spacingAndGlyphs">ブラウザ</text></svg>
<svg class="abs" style="left:282px;top:150.500px" width="11" height="11" viewBox="0 0 11 11"><circle cx="5.500" cy="5.500" r="5" fill="#222"/><path d="M2.500 5.500h6" stroke="#f2f2f2" stroke-width="1.400"/></svg>
<div class="abs" style="left:297.500px;top:149px;width:1px;height:13px;background:#777"></div><div class="abs" style="left:300px;top:149px;width:1px;height:13px;background:#999"></div>
<div class="abs" style="left:8px;top:174px;width:5.500px;height:813px;background:#a2a2a2;border-radius:3px 3px 0 0"></div>
<div class="abs rb" style="left:40px;top:174.2px;width:184px"></div>
<svg class="abs" style="left:20.0px;top:177.7px" width="13" height="13" viewBox="0 0 13 13"><defs><linearGradient id="tg1" x1="0" y1="1" x2="1" y2="0"><stop offset="0" stop-color="#333"/><stop offset="1" stop-color="#cfcfcf"/></linearGradient></defs><path d="M.8 12h11V.8z" fill="url(#tg1)" stroke="#2a2a2a" stroke-width=".9" stroke-linejoin="round"/></svg>
<svg class="abs" style="left:42.5px;top:178.4px" width="17" height="11" viewBox="0 0 17 11"><path d="M.3 5.500Q4 .3 8.500.3T16.700 5.500Q13 10.700 8.500 10.700T.3 5.500z" fill="#9a9a9a"/><circle cx="8.500" cy="5.300" r="3.100" fill="#f0f0f0"/><circle cx="8.500" cy="5.300" r="1.700" fill="#9a9a9a"/></svg>
<div class="abs" style="left:65px;top:176.2px;width:134px;height:15.800px;background:#9c9c9c"></div>
<svg class="abs" style="left:67.5px;top:176.0px" width="17" height="16" viewBox="0 0 17 16"><path d="M1 4.500L5 .7h11v10.800l-4 3.800H1z" fill="#fdfdfd" stroke="#333" stroke-width=".9" stroke-linejoin="round"/><path d="M1 4.500h11v10.800M12 4.500l4-3.800" fill="none" stroke="#555" stroke-width=".7"/><path d="M1.500 5h10v9.800h-10z" fill="#e6e8ee"/></svg>
<div class="abs" style="left:98.300px;top:177.0px;font-size:10.670px;line-height:14px;font-weight:bold;color:#fff;white-space:nowrap;font-family:'Liberation Sans',sans-serif;letter-spacing:0.36px">Maxmachine v14</div>
<svg class="abs" style="left:203px;top:177.4px" width="14" height="14" viewBox="0 0 14 14"><circle cx="7" cy="7" r="6" fill="#fafafa" stroke="#222" stroke-width="1"/><circle cx="7" cy="7" r="2.300" fill="#222"/></svg>
<div class="abs rb" style="left:58px;top:198.2px;width:121.5px"></div>
<svg class="abs" style="left:40.0px;top:201.0px" width="10" height="14" viewBox="0 0 10 14"><path d="M.8.800Q1 .5 1.500.8L9 6.600q.4.400 0 .8L1.500 13.200q-.5.300-.7 0z" fill="#f4f4f4" stroke="#2e2e2e" stroke-width="1.100"/></svg>
<svg class="abs" style="left:61.0px;top:200.0px" width="16" height="16" viewBox="-8 -8 16 16"><g fill="#9a9a9a"><circle r="5.600"/><g id="gt"><rect x="-1.700" y="-8" width="3.400" height="16" rx=".5"/><rect x="-1.700" y="-8" width="3.400" height="16" rx=".5" transform="rotate(45)"/><rect x="-1.700" y="-8" width="3.400" height="16" rx=".5" transform="rotate(90)"/><rect x="-1.700" y="-8" width="3.400" height="16" rx=".5" transform="rotate(135)"/></g></g><circle r="2.600" fill="#f0f0f0"/></svg>
<svg class="abs jt" style="left:91.0px;top:201.2px" width="79" height="14" font-size="11" fill="#1e1e1e"><text x="0" y="11" textLength="77.3" lengthAdjust="spacingAndGlyphs">ドキュメントの設定</text></svg>
<div class="abs rb" style="left:58px;top:222.2px;width:89.8px"></div>
<svg class="abs" style="left:40.0px;top:225.0px" width="10" height="14" viewBox="0 0 10 14"><path d="M.8.800Q1 .5 1.500.8L9 6.600q.4.400 0 .8L1.500 13.200q-.5.300-.7 0z" fill="#f4f4f4" stroke="#2e2e2e" stroke-width="1.100"/></svg>
<svg class="abs" style="left:61.0px;top:225.4px" width="16" height="13" viewBox="0 0 16 13"><path d="M0 .3h6.500l1 1.700H0z" fill="#b4b4b4"/><path d="M0 2h7.500l1-.9H16v11.600H0z" fill="#9a9a9a"/></svg>
<svg class="abs jt" style="left:89.8px;top:225.2px" width="48" height="14" font-size="11" fill="#1e1e1e"><text x="0" y="11" textLength="45.8" lengthAdjust="spacingAndGlyphs">ビュー管理</text></svg>
<div class="abs rb" style="left:58px;top:246.2px;width:90.7px"></div>
<svg class="abs" style="left:40.0px;top:249.0px" width="10" height="14" viewBox="0 0 10 14"><path d="M.8.800Q1 .5 1.500.8L9 6.600q.4.400 0 .8L1.500 13.200q-.5.300-.7 0z" fill="#f4f4f4" stroke="#2e2e2e" stroke-width="1.100"/></svg>
<svg class="abs" style="left:61.0px;top:249.5px" width="17" height="13" viewBox="0 0 17 13" fill="none" stroke="#a8a8a8" stroke-width=".9"><path d="M.8 6.500Q4 1.800 8.500 1.800T16.200 6.500Q13 11.200 8.500 11.200T.8 6.500z"/><circle cx="8.500" cy="6.300" r="2.600"/><path d="M3 .8l11 11.400"/></svg>
<svg class="abs" style="left:86.0px;top:249.4px" width="16" height="13" viewBox="0 0 16 13"><path d="M0 .3h6.500l1 1.700H0z" fill="#b4b4b4"/><path d="M0 2h7.500l1-.9H16v11.600H0z" fill="#9a9a9a"/></svg>
<svg class="abs jt" style="left:115.4px;top:249.2px" width="22" height="14" font-size="11" fill="#1e1e1e"><text x="0" y="11" textLength="20.5" lengthAdjust="spacingAndGlyphs">原点</text></svg>
<div class="abs rb" style="left:58px;top:270.2px;width:90.7px"></div>
<svg class="abs" style="left:37.5px;top:273.7px" width="13" height="13" viewBox="0 0 13 13"><defs><linearGradient id="tg2" x1="0" y1="1" x2="1" y2="0"><stop offset="0" stop-color="#333"/><stop offset="1" stop-color="#cfcfcf"/></linearGradient></defs><path d="M.8 12h11V.8z" fill="url(#tg2)" stroke="#2a2a2a" stroke-width=".9" stroke-linejoin="round"/></svg>
<svg class="abs" style="left:61.0px;top:274.4px" width="17" height="11" viewBox="0 0 17 11"><path d="M.3 5.500Q4 .3 8.500.3T16.700 5.500Q13 10.700 8.500 10.700T.3 5.500z" fill="#9a9a9a"/><circle cx="8.500" cy="5.300" r="3.100" fill="#f0f0f0"/><circle cx="8.500" cy="5.300" r="1.700" fill="#9a9a9a"/></svg>
<svg class="abs" style="left:86.0px;top:273.4px" width="16" height="13" viewBox="0 0 16 13"><path d="M0 .3h6.500l1 1.700H0z" fill="#b4b4b4"/><path d="M0 2h7.500l1-.9H16v11.600H0z" fill="#9a9a9a"/></svg>
<svg class="abs jt" style="left:115.4px;top:273.2px" width="26" height="14" font-size="11" fill="#1e1e1e"><text x="0" y="11" textLength="24.4" lengthAdjust="spacingAndGlyphs">ボディ</text></svg>
<div class="abs rb" style="left:76px;top:294.2px;width:106.6px"></div>
<svg class="abs" style="left:79.0px;top:298.4px" width="17" height="11" viewBox="0 0 17 11"><path d="M.3 5.500Q4 .3 8.500.3T16.700 5.500Q13 10.700 8.500 10.700T.3 5.500z" fill="#9a9a9a"/><circle cx="8.500" cy="5.300" r="3.100" fill="#f0f0f0"/><circle cx="8.500" cy="5.300" r="1.700" fill="#9a9a9a"/></svg>
<svg class="abs" style="left:104.0px;top:297.4px" width="16" height="13" viewBox="0 0 16 13"><path d="M0 .3h6.500l1 1.700H0z" fill="#b4b4b4"/><path d="M0 2h7.500l1-.9H16v11.600H0z" fill="#9a9a9a"/></svg>
<svg class="abs jt" style="left:133.4px;top:297.2px" width="42" height="14" font-size="11" fill="#1e1e1e"><text x="0" y="11" textLength="33.9" lengthAdjust="spacingAndGlyphs">グループ</text><text x="33.9" y="11">1</text></svg>
<div class="abs rb" style="left:76px;top:318.2px;width:118.5px"></div>
<svg class="abs" style="left:79.0px;top:322.4px" width="17" height="11" viewBox="0 0 17 11"><path d="M.3 5.500Q4 .3 8.500.3T16.700 5.500Q13 10.700 8.500 10.700T.3 5.500z" fill="#9a9a9a"/><circle cx="8.500" cy="5.300" r="3.100" fill="#f0f0f0"/><circle cx="8.500" cy="5.300" r="1.700" fill="#9a9a9a"/></svg>
<svg class="abs" style="left:104.0px;top:320.0px" width="16" height="16" viewBox="0 0 16 16"><defs><linearGradient id="bg3" x1="0" x2="1"><stop offset="0" stop-color="#fff"/><stop offset="1" stop-color="#c9ccd2"/></linearGradient></defs><rect x=".7" y=".7" width="14.600" height="14.600" rx="4" fill="#fdfdfd" stroke="#3a4658" stroke-width="1.100"/><path d="M4.800 6h7.500v8.300h-5q-2.500 0-2.500-2.500z" fill="url(#bg3)"/></svg>
<svg class="abs jt" style="left:133.4px;top:321.2px" width="53" height="14" font-size="11" fill="#1e1e1e"><text x="0" y="11" textLength="51.3" lengthAdjust="spacingAndGlyphs">ボディ・上面</text></svg>
<div class="abs rb" style="left:76px;top:342.2px;width:118.5px"></div>
<svg class="abs" style="left:79.0px;top:346.4px" width="17" height="11" viewBox="0 0 17 11"><path d="M.3 5.500Q4 .3 8.500.3T16.700 5.500Q13 10.700 8.500 10.700T.3 5.500z" fill="#9a9a9a"/><circle cx="8.500" cy="5.300" r="3.100" fill="#f0f0f0"/><circle cx="8.500" cy="5.300" r="1.700" fill="#9a9a9a"/></svg>
<svg class="abs" style="left:104.0px;top:344.0px" width="16" height="16" viewBox="0 0 16 16"><defs><linearGradient id="bg4" x1="0" x2="1"><stop offset="0" stop-color="#fff"/><stop offset="1" stop-color="#c9ccd2"/></linearGradient></defs><rect x=".7" y=".7" width="14.600" height="14.600" rx="4" fill="#fdfdfd" stroke="#3a4658" stroke-width="1.100"/><path d="M4.800 6h7.500v8.300h-5q-2.500 0-2.500-2.500z" fill="url(#bg4)"/></svg>
<svg class="abs jt" style="left:133.4px;top:345.2px" width="53" height="14" font-size="11" fill="#1e1e1e"><text x="0" y="11" textLength="51.3" lengthAdjust="spacingAndGlyphs">ボディ・底面</text></svg>
<div class="abs rb" style="left:76px;top:366.2px;width:110.3px"></div>
<svg class="abs" style="left:79.0px;top:370.4px" width="17" height="11" viewBox="0 0 17 11"><path d="M.3 5.500Q4 .3 8.500.3T16.700 5.500Q13 10.700 8.500 10.700T.3 5.500z" fill="#9a9a9a"/><circle cx="8.500" cy="5.300" r="3.100" fill="#f0f0f0"/><circle cx="8.500" cy="5.300" r="1.700" fill="#9a9a9a"/></svg>
<svg class="abs" style="left:104.0px;top:368.0px" width="16" height="16" viewBox="0 0 16 16"><defs><linearGradient id="bg5" x1="0" x2="1"><stop offset="0" stop-color="#fff"/><stop offset="1" stop-color="#c9ccd2"/></linearGradient></defs><rect x=".7" y=".7" width="14.600" height="14.600" rx="4" fill="#fdfdfd" stroke="#3a4658" stroke-width="1.100"/><path d="M4.800 6h7.500v8.300h-5q-2.500 0-2.500-2.500z" fill="url(#bg5)"/></svg>
<svg class="abs jt" style="left:133.4px;top:369.2px" width="47" height="14" font-size="11" fill="#1e1e1e"><text x="0" y="11" textLength="44.6" lengthAdjust="spacingAndGlyphs">キーボード</text></svg>
<div class="abs rb" style="left:76px;top:390.2px;width:90.7px"></div>
<svg class="abs" style="left:79.0px;top:394.4px" width="17" height="11" viewBox="0 0 17 11"><path d="M.3 5.500Q4 .3 8.500.3T16.700 5.500Q13 10.700 8.500 10.700T.3 5.500z" fill="#9a9a9a"/><circle cx="8.500" cy="5.300" r="3.100" fill="#f0f0f0"/><circle cx="8.500" cy="5.300" r="1.700" fill="#9a9a9a"/></svg>
<svg class="abs" style="left:104.0px;top:392.0px" width="16" height="16" viewBox="0 0 16 16"><defs><linearGradient id="bg6" x1="0" x2="1"><stop offset="0" stop-color="#fff"/><stop offset="1" stop-color="#c9ccd2"/></linearGradient></defs><rect x=".7" y=".7" width="14.600" height="14.600" rx="4" fill="#fdfdfd" stroke="#3a4658" stroke-width="1.100"/><path d="M4.800 6h7.500v8.300h-5q-2.500 0-2.500-2.500z" fill="url(#bg6)"/></svg>
<svg class="abs jt" style="left:133.4px;top:393.2px" width="24" height="14" font-size="11" fill="#1e1e1e"><text x="0" y="11" textLength="21.7" lengthAdjust="spacingAndGlyphs">グリル</text></svg>
<div class="abs rb" style="left:58px;top:414.2px;width:110.5px"></div>
<svg class="abs" style="left:40.0px;top:417.0px" width="10" height="14" viewBox="0 0 10 14"><path d="M.8.800Q1 .5 1.500.8L9 6.600q.4.400 0 .8L1.500 13.200q-.5.300-.7 0z" fill="#f4f4f4" stroke="#2e2e2e" stroke-width="1.100"/></svg>
<svg class="abs" style="left:61.0px;top:418.4px" width="17" height="11" viewBox="0 0 17 11"><path d="M.3 5.500Q4 .3 8.500.3T16.700 5.500Q13 10.700 8.500 10.700T.3 5.500z" fill="#9a9a9a"/><circle cx="8.500" cy="5.300" r="3.100" fill="#f0f0f0"/><circle cx="8.500" cy="5.300" r="1.700" fill="#9a9a9a"/></svg>
<svg class="abs" style="left:86.0px;top:417.4px" width="16" height="13" viewBox="0 0 16 13"><path d="M0 .3h6.500l1 1.700H0z" fill="#b4b4b4"/><path d="M0 2h7.500l1-.9H16v11.600H0z" fill="#9a9a9a"/></svg>
<svg class="abs jt" style="left:115.4px;top:417.2px" width="43" height="14" font-size="11" fill="#1e1e1e"><text x="0" y="11" textLength="40.9" lengthAdjust="spacingAndGlyphs">キャンバス</text></svg>
<div class="abs rb" style="left:58px;top:438.2px;width:138.6px"></div>
<svg class="abs" style="left:40.0px;top:441.0px" width="10" height="14" viewBox="0 0 10 14"><path d="M.8.800Q1 .5 1.500.8L9 6.600q.4.400 0 .8L1.500 13.200q-.5.300-.7 0z" fill="#f4f4f4" stroke="#2e2e2e" stroke-width="1.100"/></svg>
<svg class="abs" style="left:61.0px;top:442.4px" width="17" height="11" viewBox="0 0 17 11"><path d="M.3 5.500Q4 .3 8.500.3T16.700 5.500Q13 10.700 8.500 10.700T.3 5.500z" fill="#9a9a9a"/><circle cx="8.500" cy="5.300" r="3.100" fill="#f0f0f0"/><circle cx="8.500" cy="5.300" r="1.700" fill="#9a9a9a"/></svg>
<svg class="abs" style="left:86.0px;top:441.4px" width="16" height="13" viewBox="0 0 16 13"><path d="M0 .3h6.500l1 1.700H0z" fill="#b4b4b4"/><path d="M0 2h7.500l1-.9H16v11.600H0z" fill="#9a9a9a"/></svg>
<svg class="abs jt" style="left:115.4px;top:441.2px" width="73" height="14" font-size="11" fill="#1e1e1e"><text x="0" y="11" textLength="70.9" lengthAdjust="spacingAndGlyphs">コンストラクション</text></svg>
<div class="abs rb" style="left:58px;top:462.2px;width:85.5px"></div>
<svg class="abs" style="left:60.8px;top:463.7px" width="17" height="17" viewBox="0 0 17 17"><path d="M.3 13.300h9.400l2.300-2.300v2.500L9.700 16H.3z" fill="#bdbdbd"/><path d="M.3 3.300h9.400v10H.3z" fill="#6aaee4"/><path d="M.3 3.300L2.600.8H12L9.700 3.300z" fill="#8fcaf6"/><path d="M9.700 3.300L12 .8v10.200l-2.300 2.300z" fill="#4a90c8"/><path d="M14.700 13V2.500M13.300 4.300l1.400-2.300 1.400 2.300" fill="none" stroke="#222" stroke-width="1"/></svg>
<svg class="abs jt" style="left:90.8px;top:465.2px" width="46" height="14" font-size="11" fill="#1e1e1e"><text x="0" y="11" textLength="37.9" lengthAdjust="spacingAndGlyphs">押し出し</text><text x="38.2" y="11">2</text></svg>
<div class="abs rb" style="left:58px;top:486.2px;width:85.5px"></div>
<svg class="abs" style="left:60.8px;top:487.7px" width="17" height="17" viewBox="0 0 17 17"><path d="M.7 16V4.500L4 1h4.500q7.500.500 7.800 8.500v4L13.500 16z" fill="#dcdcdc" stroke="#555" stroke-width="1.100" stroke-linejoin="round"/><path d="M13.500 16l2.800-2.500V9.500l-2.800 2.300z" fill="#b9b9b9"/><path d="M7.500 2.600L9.500.8q6.300 1.200 6.800 8.200l-2.400 2.500q-.4-7-6.400-8.900z" fill="#5aa4de"/></svg>
<svg class="abs jt" style="left:90.8px;top:489.2px" width="43" height="14" font-size="11" fill="#1e1e1e"><text x="0" y="11" textLength="34.0" lengthAdjust="spacingAndGlyphs">フィレット</text><text x="35.2" y="11">7</text></svg>
<div class="abs rb" style="left:58px;top:510.2px;width:85.5px"></div>
<svg class="abs" style="left:60.8px;top:511.7px" width="17" height="17" viewBox="0 0 17 17"><path d="M.7 16V4.500L4 1h4.500q7.500.500 7.800 8.500v4L13.500 16z" fill="#dcdcdc" stroke="#555" stroke-width="1.100" stroke-linejoin="round"/><path d="M13.500 16l2.800-2.500V9.500l-2.800 2.300z" fill="#b9b9b9"/><path d="M7.500 2.600L9.500.8q6.300 1.200 6.800 8.200l-2.400 2.500q-.4-7-6.400-8.900z" fill="#5aa4de"/></svg>
<svg class="abs jt" style="left:90.8px;top:513.2px" width="43" height="14" font-size="11" fill="#1e1e1e"><text x="0" y="11" textLength="34.0" lengthAdjust="spacingAndGlyphs">フィレット</text><text x="35.2" y="11">8</text></svg>
<div class="abs rb" style="left:58px;top:534.2px;width:85.5px"></div>
<svg class="abs" style="left:60.8px;top:535.7px" width="17" height="17" viewBox="0 0 17 17"><path d="M.7 16V4.500L4 1h4.500q7.500.500 7.800 8.500v4L13.500 16z" fill="#dcdcdc" stroke="#555" stroke-width="1.100" stroke-linejoin="round"/><path d="M13.500 16l2.800-2.500V9.500l-2.800 2.300z" fill="#b9b9b9"/><path d="M7.500 2.600L9.500.8q6.300 1.200 6.800 8.200l-2.400 2.500q-.4-7-6.400-8.900z" fill="#5aa4de"/></svg>
<svg class="abs jt" style="left:90.8px;top:537.2px" width="43" height="14" font-size="11" fill="#1e1e1e"><text x="0" y="11" textLength="34.0" lengthAdjust="spacingAndGlyphs">フィレット</text><text x="35.2" y="11">9</text></svg>
<div class="abs rb" style="left:58px;top:558.2px;width:93.7px"></div>
<svg class="abs" style="left:60.8px;top:559.7px" width="17" height="17" viewBox="0 0 17 17"><path d="M.3 13.300h9.400l2.300-2.300v2.500L9.700 16H.3z" fill="#bdbdbd"/><path d="M.3 3.300h9.400v10H.3z" fill="#6aaee4"/><path d="M.3 3.300L2.600.8H12L9.700 3.300z" fill="#8fcaf6"/><path d="M9.700 3.300L12 .8v10.200l-2.300 2.300z" fill="#4a90c8"/><path d="M14.700 13V2.500M13.300 4.300l1.400-2.300 1.400 2.300" fill="none" stroke="#222" stroke-width="1"/></svg>
<svg class="abs jt" style="left:90.8px;top:561.2px" width="52" height="14" font-size="11" fill="#1e1e1e"><text x="0" y="11" textLength="37.9" lengthAdjust="spacingAndGlyphs">押し出し</text><text x="38.2" y="11">32</text></svg>
<div class="abs rb" style="left:58px;top:582.2px;width:89.8px"></div>
<svg class="abs" style="left:60.8px;top:583.7px" width="17" height="17" viewBox="0 0 17 17"><path d="M.7 16V4.500L4 1h4.500q7.500.500 7.800 8.500v4L13.500 16z" fill="#dcdcdc" stroke="#555" stroke-width="1.100" stroke-linejoin="round"/><path d="M13.500 16l2.800-2.500V9.500l-2.800 2.300z" fill="#b9b9b9"/><path d="M7.500 2.600L9.500.8q6.300 1.200 6.800 8.200l-2.400 2.500q-.4-7-6.400-8.900z" fill="#5aa4de"/></svg>
<svg class="abs jt" style="left:90.8px;top:585.2px" width="49" height="14" font-size="11" fill="#1e1e1e"><text x="0" y="11" textLength="34.0" lengthAdjust="spacingAndGlyphs">フィレット</text><text x="35.2" y="11">33</text></svg>
<div class="abs rb" style="left:58px;top:606.2px;width:89.8px"></div>
<svg class="abs" style="left:60.8px;top:607.7px" width="17" height="17" viewBox="0 0 17 17"><path d="M.7 16V4.500L4 1h4.500q7.500.500 7.800 8.500v4L13.500 16z" fill="#dcdcdc" stroke="#555" stroke-width="1.100" stroke-linejoin="round"/><path d="M13.500 16l2.800-2.500V9.500l-2.800 2.300z" fill="#b9b9b9"/><path d="M7.500 2.600L9.500.8q6.300 1.200 6.800 8.200l-2.400 2.500q-.4-7-6.400-8.900z" fill="#5aa4de"/></svg>
<svg class="abs jt" style="left:90.8px;top:609.2px" width="49" height="14" font-size="11" fill="#1e1e1e"><text x="0" y="11" textLength="34.0" lengthAdjust="spacingAndGlyphs">フィレット</text><text x="35.2" y="11">37</text></svg>
<div class="abs rb" style="left:58px;top:630.2px;width:89.8px"></div>
<svg class="abs" style="left:60.8px;top:631.7px" width="17" height="17" viewBox="0 0 17 17"><path d="M.7 16V4.500L4 1h4.500q7.500.500 7.800 8.500v4L13.500 16z" fill="#dcdcdc" stroke="#555" stroke-width="1.100" stroke-linejoin="round"/><path d="M13.500 16l2.800-2.500V9.500l-2.800 2.300z" fill="#b9b9b9"/><path d="M7.500 2.600L9.500.8q6.300 1.200 6.800 8.200l-2.400 2.500q-.4-7-6.400-8.900z" fill="#5aa4de"/></svg>
<svg class="abs jt" style="left:90.8px;top:633.2px" width="49" height="14" font-size="11" fill="#1e1e1e"><text x="0" y="11" textLength="34.0" lengthAdjust="spacingAndGlyphs">フィレット</text><text x="35.2" y="11">39</text></svg>
<div class="abs rb" style="left:58px;top:654.2px;width:89.8px"></div>
<svg class="abs" style="left:60.8px;top:655.7px" width="17" height="17" viewBox="0 0 17 17"><path d="M.7 16V4.500L4 1h4.500q7.500.500 7.800 8.500v4L13.500 16z" fill="#dcdcdc" stroke="#555" stroke-width="1.100" stroke-linejoin="round"/><path d="M13.500 16l2.800-2.500V9.500l-2.800 2.300z" fill="#b9b9b9"/><path d="M7.500 2.600L9.500.8q6.300 1.200 6.800 8.200l-2.400 2.500q-.4-7-6.400-8.900z" fill="#5aa4de"/></svg>
<svg class="abs jt" style="left:90.8px;top:657.2px" width="49" height="14" font-size="11" fill="#1e1e1e"><text x="0" y="11" textLength="34.0" lengthAdjust="spacingAndGlyphs">フィレット</text><text x="35.2" y="11">40</text></svg>
<div class="abs rb" style="left:58px;top:678.2px;width:89.8px"></div>
<svg class="abs" style="left:60.8px;top:679.7px" width="17" height="17" viewBox="0 0 17 17"><path d="M.7 16V4.500L4 1h4.500q7.500.500 7.800 8.500v4L13.500 16z" fill="#dcdcdc" stroke="#555" stroke-width="1.100" stroke-linejoin="round"/><path d="M13.500 16l2.800-2.500V9.500l-2.800 2.300z" fill="#b9b9b9"/><path d="M7.500 2.600L9.500.8q6.300 1.200 6.800 8.200l-2.400 2.500q-.4-7-6.400-8.900z" fill="#5aa4de"/></svg>
<svg class="abs jt" style="left:90.8px;top:681.2px" width="49" height="14" font-size="11" fill="#1e1e1e"><text x="0" y="11" textLength="34.0" lengthAdjust="spacingAndGlyphs">フィレット</text><text x="35.2" y="11">41</text></svg>
<div class="abs rb" style="left:58px;top:702.2px;width:89.8px"></div>
<svg class="abs" style="left:60.8px;top:703.7px" width="17" height="17" viewBox="0 0 17 17"><path d="M.7 16V4.500L4 1h4.500q7.500.500 7.800 8.500v4L13.500 16z" fill="#dcdcdc" stroke="#555" stroke-width="1.100" stroke-linejoin="round"/><path d="M13.500 16l2.800-2.500V9.500l-2.800 2.300z" fill="#b9b9b9"/><path d="M7.500 2.600L9.500.8q6.300 1.200 6.800 8.200l-2.400 2.500q-.4-7-6.400-8.900z" fill="#5aa4de"/></svg>
<svg class="abs jt" style="left:90.8px;top:705.2px" width="49" height="14" font-size="11" fill="#1e1e1e"><text x="0" y="11" textLength="34.0" lengthAdjust="spacingAndGlyphs">フィレット</text><text x="35.2" y="11">42</text></svg>
<div class="abs rb" style="left:58px;top:726.2px;width:93.7px"></div>
<svg class="abs" style="left:60.8px;top:727.7px" width="17" height="17" viewBox="0 0 17 17"><path d="M.3 13.300h9.400l2.300-2.300v2.500L9.700 16H.3z" fill="#bdbdbd"/><path d="M.3 3.300h9.400v10H.3z" fill="#6aaee4"/><path d="M.3 3.300L2.600.8H12L9.700 3.300z" fill="#8fcaf6"/><path d="M9.700 3.300L12 .8v10.200l-2.300 2.300z" fill="#4a90c8"/><path d="M14.700 13V2.500M13.300 4.300l1.400-2.300 1.400 2.300" fill="none" stroke="#222" stroke-width="1"/></svg>
<svg class="abs jt" style="left:90.8px;top:729.2px" width="52" height="14" font-size="11" fill="#1e1e1e"><text x="0" y="11" textLength="37.9" lengthAdjust="spacingAndGlyphs">押し出し</text><text x="38.2" y="11">54</text></svg>
<div class="abs rb" style="left:58px;top:750.2px;width:89.8px"></div>
<svg class="abs" style="left:60.8px;top:751.7px" width="17" height="17" viewBox="0 0 17 17"><path d="M.7 16V4.500L4 1h4.500q7.500.500 7.800 8.500v4L13.500 16z" fill="#dcdcdc" stroke="#555" stroke-width="1.100" stroke-linejoin="round"/><path d="M13.500 16l2.800-2.500V9.500l-2.800 2.300z" fill="#b9b9b9"/><path d="M7.500 2.600L9.500.8q6.300 1.200 6.800 8.200l-2.400 2.500q-.4-7-6.400-8.900z" fill="#5aa4de"/></svg>
<svg class="abs jt" style="left:90.8px;top:753.2px" width="49" height="14" font-size="11" fill="#1e1e1e"><text x="0" y="11" textLength="34.0" lengthAdjust="spacingAndGlyphs">フィレット</text><text x="35.2" y="11">55</text></svg>
<div class="abs rb" style="left:58px;top:774.2px;width:89.8px"></div>
<svg class="abs" style="left:60.8px;top:775.7px" width="17" height="17" viewBox="0 0 17 17"><path d="M.7 16V4.500L4 1h4.500q7.500.500 7.800 8.500v4L13.500 16z" fill="#dcdcdc" stroke="#555" stroke-width="1.100" stroke-linejoin="round"/><path d="M13.500 16l2.800-2.500V9.500l-2.800 2.300z" fill="#b9b9b9"/><path d="M7.500 2.600L9.500.8q6.300 1.200 6.800 8.200l-2.400 2.500q-.4-7-6.400-8.900z" fill="#5aa4de"/></svg>
<svg class="abs jt" style="left:90.8px;top:777.2px" width="49" height="14" font-size="11" fill="#1e1e1e"><text x="0" y="11" textLength="34.0" lengthAdjust="spacingAndGlyphs">フィレット</text><text x="35.2" y="11">56</text></svg>
<div class="abs rb" style="left:58px;top:798.2px;width:89.8px"></div>
<svg class="abs" style="left:60.8px;top:799.7px" width="17" height="17" viewBox="0 0 17 17"><path d="M.7 16V4.500L4 1h4.500q7.500.500 7.800 8.500v4L13.500 16z" fill="#dcdcdc" stroke="#555" stroke-width="1.100" stroke-linejoin="round"/><path d="M13.500 16l2.800-2.500V9.500l-2.800 2.300z" fill="#b9b9b9"/><path d="M7.500 2.600L9.500.8q6.300 1.200 6.800 8.200l-2.400 2.500q-.4-7-6.400-8.900z" fill="#5aa4de"/></svg>
<svg class="abs jt" style="left:90.8px;top:801.2px" width="49" height="14" font-size="11" fill="#1e1e1e"><text x="0" y="11" textLength="34.0" lengthAdjust="spacingAndGlyphs">フィレット</text><text x="35.2" y="11">57</text></svg>
<div class="abs rb" style="left:58px;top:822.2px;width:89.8px"></div>
<svg class="abs" style="left:60.8px;top:823.7px" width="17" height="17" viewBox="0 0 17 17"><path d="M.7 16V4.500L4 1h4.500q7.500.500 7.800 8.500v4L13.500 16z" fill="#dcdcdc" stroke="#555" stroke-width="1.100" stroke-linejoin="round"/><path d="M13.500 16l2.800-2.500V9.500l-2.800 2.300z" fill="#b9b9b9"/><path d="M7.500 2.600L9.500.8q6.300 1.200 6.800 8.200l-2.400 2.500q-.4-7-6.400-8.900z" fill="#5aa4de"/></svg>
<svg class="abs jt" style="left:90.8px;top:825.2px" width="49" height="14" font-size="11" fill="#1e1e1e"><text x="0" y="11" textLength="34.0" lengthAdjust="spacingAndGlyphs">フィレット</text><text x="35.2" y="11">58</text></svg>
<div class="abs rb" style="left:58px;top:846.2px;width:89.8px"></div>
<svg class="abs" style="left:60.8px;top:847.7px" width="17" height="17" viewBox="0 0 17 17"><path d="M.7 16V4.500L4 1h4.500q7.500.500 7.800 8.500v4L13.500 16z" fill="#dcdcdc" stroke="#555" stroke-width="1.100" stroke-linejoin="round"/><path d="M13.500 16l2.800-2.500V9.500l-2.800 2.300z" fill="#b9b9b9"/><path d="M7.500 2.600L9.500.8q6.300 1.200 6.800 8.200l-2.400 2.500q-.4-7-6.400-8.900z" fill="#5aa4de"/></svg>
<svg class="abs jt" style="left:90.8px;top:849.2px" width="49" height="14" font-size="11" fill="#1e1e1e"><text x="0" y="11" textLength="34.0" lengthAdjust="spacingAndGlyphs">フィレット</text><text x="35.2" y="11">59</text></svg>
<div class="abs rb" style="left:58px;top:870.2px;width:93.7px"></div>
<svg class="abs" style="left:60.8px;top:871.7px" width="17" height="17" viewBox="0 0 17 17"><path d="M.3 13.300h9.400l2.300-2.300v2.500L9.700 16H.3z" fill="#bdbdbd"/><path d="M.3 3.300h9.400v10H.3z" fill="#6aaee4"/><path d="M.3 3.300L2.600.8H12L9.700 3.300z" fill="#8fcaf6"/><path d="M9.700 3.300L12 .8v10.200l-2.300 2.300z" fill="#4a90c8"/><path d="M14.700 13V2.500M13.300 4.300l1.400-2.300 1.400 2.300" fill="none" stroke="#222" stroke-width="1"/></svg>
<svg class="abs jt" style="left:90.8px;top:873.2px" width="52" height="14" font-size="11" fill="#1e1e1e"><text x="0" y="11" textLength="37.9" lengthAdjust="spacingAndGlyphs">押し出し</text><text x="38.2" y="11">62</text></svg>
<div class="abs rb" style="left:58px;top:894.2px;width:93.7px"></div>
<svg class="abs" style="left:60.8px;top:895.7px" width="17" height="17" viewBox="0 0 17 17"><path d="M.3 13.300h9.400l2.300-2.300v2.500L9.700 16H.3z" fill="#bdbdbd"/><path d="M.3 3.300h9.400v10H.3z" fill="#6aaee4"/><path d="M.3 3.300L2.600.8H12L9.700 3.300z" fill="#8fcaf6"/><path d="M9.700 3.300L12 .8v10.200l-2.300 2.300z" fill="#4a90c8"/><path d="M14.700 13V2.500M13.300 4.300l1.400-2.300 1.400 2.300" fill="none" stroke="#222" stroke-width="1"/></svg>
<svg class="abs jt" style="left:90.8px;top:897.2px" width="52" height="14" font-size="11" fill="#1e1e1e"><text x="0" y="11" textLength="37.9" lengthAdjust="spacingAndGlyphs">押し出し</text><text x="38.2" y="11">63</text></svg>
<div class="abs rb" style="left:58px;top:918.2px;width:93.7px"></div>
<svg class="abs" style="left:60.8px;top:919.7px" width="17" height="17" viewBox="0 0 17 17"><path d="M.3 13.300h9.400l2.300-2.300v2.500L9.700 16H.3z" fill="#bdbdbd"/><path d="M.3 3.300h9.400v10H.3z" fill="#6aaee4"/><path d="M.3 3.300L2.600.8H12L9.700 3.300z" fill="#8fcaf6"/><path d="M9.700 3.300L12 .8v10.200l-2.300 2.300z" fill="#4a90c8"/><path d="M14.700 13V2.500M13.300 4.300l1.400-2.300 1.400 2.300" fill="none" stroke="#222" stroke-width="1"/></svg>
<svg class="abs jt" style="left:90.8px;top:921.2px" width="52" height="14" font-size="11" fill="#1e1e1e"><text x="0" y="11" textLength="37.9" lengthAdjust="spacingAndGlyphs">押し出し</text><text x="38.2" y="11">64</text></svg>
<div class="abs rb" style="left:58px;top:942.2px;width:93.7px"></div>
<svg class="abs" style="left:60.8px;top:943.7px" width="17" height="17" viewBox="0 0 17 17"><path d="M.3 13.300h9.400l2.300-2.300v2.500L9.700 16H.3z" fill="#bdbdbd"/><path d="M.3 3.300h9.400v10H.3z" fill="#6aaee4"/><path d="M.3 3.300L2.600.8H12L9.700 3.300z" fill="#8fcaf6"/><path d="M9.700 3.300L12 .8v10.200l-2.300 2.300z" fill="#4a90c8"/><path d="M14.700 13V2.500M13.300 4.300l1.400-2.300 1.400 2.300" fill="none" stroke="#222" stroke-width="1"/></svg>
<svg class="abs jt" style="left:90.8px;top:945.2px" width="52" height="14" font-size="11" fill="#1e1e1e"><text x="0" y="11" textLength="37.9" lengthAdjust="spacingAndGlyphs">押し出し</text><text x="38.2" y="11">65</text></svg>
<div class="abs rb" style="left:58px;top:966.2px;width:93.7px"></div>
<svg class="abs" style="left:60.8px;top:967.7px" width="17" height="17" viewBox="0 0 17 17"><path d="M.3 13.300h9.400l2.300-2.300v2.500L9.700 16H.3z" fill="#bdbdbd"/><path d="M.3 3.300h9.400v10H.3z" fill="#6aaee4"/><path d="M.3 3.300L2.600.8H12L9.700 3.300z" fill="#8fcaf6"/><path d="M9.700 3.300L12 .8v10.200l-2.300 2.300z" fill="#4a90c8"/><path d="M14.700 13V2.500M13.300 4.300l1.400-2.300 1.400 2.300" fill="none" stroke="#222" stroke-width="1"/></svg>
<svg class="abs jt" style="left:90.8px;top:969.2px" width="52" height="14" font-size="11" fill="#1e1e1e"><text x="0" y="11" textLength="37.9" lengthAdjust="spacingAndGlyphs">押し出し</text><text x="38.2" y="11">66</text></svg>
<div class="abs" style="left:4px;top:1010.500px;width:298px;height:24px;background:#f2f2f2;border:1px solid #c9c9c9;box-sizing:content-box"></div>
<svg class="abs jt" style="left:28.3px;top:1015.5px" width="33" height="14" font-size="11" fill="#333"><text x="0" y="11" textLength="30.9" lengthAdjust="spacingAndGlyphs">コメント</text></svg>
<svg class="abs" style="left:282px;top:1017.500px" width="11" height="11" viewBox="0 0 11 11"><circle cx="5.500" cy="5.500" r="5" fill="#222"/><path d="M2.500 5.500h6M5.500 2.500v6" stroke="#f2f2f2" stroke-width="1.300"/></svg>
<div class="abs" style="left:297.500px;top:1016px;width:1px;height:13px;background:#777"></div><div class="abs" style="left:300px;top:1016px;width:1px;height:13px;background:#999"></div>
<svg class="abs jt" style="left:40.5px;top:88.2px" width="42" height="14" font-size="11.5" fill="#222" font-weight="bold"><text x="0" y="11" textLength="40.5" lengthAdjust="spacingAndGlyphs">デザイン</text></svg>
<svg class="abs jt" style="left:148.7px;top:59.2px" width="35" height="14" font-size="11" fill="#0b8fd4" font-weight="bold"><text x="0" y="11" textLength="33.0" lengthAdjust="spacingAndGlyphs">ソリッド</text></svg>
<svg class="abs jt" style="left:227.7px;top:59.2px" width="41" height="14" font-size="11" fill="#333"><text x="0" y="11" textLength="39.2" lengthAdjust="spacingAndGlyphs">サーフェス</text></svg>
<svg class="abs jt" style="left:315.5px;top:59.2px" width="31" height="14" font-size="11" fill="#333"><text x="0" y="11" textLength="28.6" lengthAdjust="spacingAndGlyphs">メッシュ</text></svg>
<svg class="abs jt" style="left:388.5px;top:59.2px" width="33" height="14" font-size="11" fill="#333"><text x="0" y="11" textLength="30.9" lengthAdjust="spacingAndGlyphs">フォーム</text></svg>
<svg class="abs jt" style="left:466.9px;top:59.2px" width="54" height="14" font-size="11" fill="#333"><text x="0" y="11" textLength="52.3" lengthAdjust="spacingAndGlyphs">シート メタル</text></svg>
<svg class="abs jt" style="left:564.6px;top:59.2px" width="47" height="14" font-size="11" fill="#333"><text x="0" y="11" textLength="44.9" lengthAdjust="spacingAndGlyphs">プラスチック</text></svg>
<svg class="abs jt" style="left:657.6px;top:59.2px" width="53" height="14" font-size="11" fill="#333"><text x="0" y="11" textLength="51.3" lengthAdjust="spacingAndGlyphs">ユーティリティ</text></svg>
<svg class="abs jt" style="left:220.3px;top:119.5px" width="22" height="14" font-size="11" fill="#222"><text x="0" y="11" textLength="19.9" lengthAdjust="spacingAndGlyphs">作成</text></svg>
<svg class="abs" style="left:243.5px;top:124.500px" width="7" height="5" viewBox="0 0 7 5"><path d="M.2.300h6.600L3.500 4.700z" fill="#333"/></svg>
<svg class="abs jt" style="left:467.9px;top:119.5px" width="22" height="14" font-size="11" fill="#222"><text x="0" y="11" textLength="19.9" lengthAdjust="spacingAndGlyphs">修正</text></svg>
<svg class="abs" style="left:491.1px;top:124.500px" width="7" height="5" viewBox="0 0 7 5"><path d="M.2.300h6.600L3.500 4.700z" fill="#333"/></svg>
<svg class="abs jt" style="left:642.7px;top:119.5px" width="40" height="14" font-size="11" fill="#222"><text x="0" y="11" textLength="38.5" lengthAdjust="spacingAndGlyphs">アセンブリ</text></svg>
<svg class="abs" style="left:684.5px;top:124.500px" width="7" height="5" viewBox="0 0 7 5"><path d="M.2.300h6.600L3.500 4.700z" fill="#333"/></svg>
<svg class="abs jt" style="left:731.3px;top:119.5px" width="22" height="14" font-size="11" fill="#222"><text x="0" y="11" textLength="19.9" lengthAdjust="spacingAndGlyphs">構築</text></svg>
<svg class="abs" style="left:754.5px;top:124.500px" width="7" height="5" viewBox="0 0 7 5"><path d="M.2.300h6.600L3.500 4.700z" fill="#333"/></svg>
<svg class="abs jt" style="left:789.7px;top:119.5px" width="22" height="14" font-size="11" fill="#222"><text x="0" y="11" textLength="19.9" lengthAdjust="spacingAndGlyphs">検査</text></svg>
<svg class="abs" style="left:812.9px;top:124.500px" width="7" height="5" viewBox="0 0 7 5"><path d="M.2.300h6.600L3.500 4.700z" fill="#333"/></svg>
<svg class="abs jt" style="left:848.7px;top:119.5px" width="22" height="14" font-size="11" fill="#222"><text x="0" y="11" textLength="19.9" lengthAdjust="spacingAndGlyphs">挿入</text></svg>
<svg class="abs" style="left:871.9px;top:124.500px" width="7" height="5" viewBox="0 0 7 5"><path d="M.2.300h6.600L3.500 4.700z" fill="#333"/></svg>
<svg class="abs jt" style="left:907.7px;top:119.5px" width="22" height="14" font-size="11" fill="#222"><text x="0" y="11" textLength="19.9" lengthAdjust="spacingAndGlyphs">選択</text></svg>
<svg class="abs" style="left:930.9px;top:124.500px" width="7" height="5" viewBox="0 0 7 5"><path d="M.2.300h6.600L3.500 4.700z" fill="#333"/></svg>
<!-- nav bar -->
<div class="abs" style="left:841px;top:1012px;width:237px;height:24px;background:#f0f0f0"></div>
<svg class="abs" style="left:841px;top:1012px" width="237" height="24" viewBox="0 0 237 24">
<g fill="#222"><path d="M24.300 10h5.800l-2.900 3.800z"/><path d="M135 10h5.800l-2.900 3.800z"/><path d="M165.500 10h5.800l-2.900 3.800z"/><path d="M196.300 10h5.800l-2.900 3.800z"/><path d="M227.300 10h5.800l-2.900 3.800z"/></g>
<!-- orbit -->
<g fill="none" stroke="#222" stroke-width="1.100"><path d="M10.300 20V6.500h1.800V20z" fill="#f4f4f4"/><path d="M8.500 7.500l2.700-3.300 2.700 3.300z" fill="#f4f4f4"/><path d="M9.500 9.800Q3.500 10.500 3.500 13q0 2 3.500 2.600M13 9.800q6 .7 6 3.200 0 3-9 3.200" stroke-width="1.300"/><path d="M8.800 13l-3.300 2.800 3.500 2.200z" fill="#222"/></g>
<!-- look at -->
<g fill="none" stroke="#2e3440" stroke-width="1.200"><rect x="36.500" y="9.500" width="15" height="10.500" fill="#f4f4f4"/><rect x="39.500" y="13" width="9" height="4" fill="#9aa4b8"/><path d="M38 9.500l4.500-4 2.500 2 4-2.500 1 4.500" /></g>
<!-- pan hand -->
<path d="M66 20.500q-2-2-3.200-5-.6-1.800.8-1.800 1 0 2 2V7.500q0-1.300 1.100-1.300t1.100 1.300V6q0-1.300 1.100-1.300T70 6v1q0-1.300 1.100-1.300T72.200 7v1.600q0-1.200 1-1.200t1 1.200V15q0 3-1.700 5.500z" fill="#fafafa" stroke="#2e3440" stroke-width="1" stroke-linejoin="round"/><path d="M67.700 7.500V12M70 7v5M72.200 8.500V12" stroke="#2e3440" stroke-width=".8"/>
<!-- zoom -->
<circle cx="93.500" cy="10.500" r="4.800" fill="#dff0f5" stroke="#2e3440" stroke-width="1.200"/><path d="M97 14.300l4.500 4.700" stroke="#2e3440" stroke-width="2.400" stroke-linecap="round"/><path d="M99.500 6.500h5M102 4v5M99.500 10.800h5" stroke="#222" stroke-width="1"/>
<!-- zoom window -->
<rect x="114.500" y="4.500" width="15" height="15" fill="none" stroke="#333" stroke-width="1" stroke-dasharray="2.500 1.500"/><circle cx="121" cy="10.500" r="5.600" fill="#e4f2f5" stroke="#2e3440" stroke-width="1.300"/><path d="M125.200 15l4.300 4.500" stroke="#2e3440" stroke-width="2.600" stroke-linecap="round"/>
<!-- display -->
<rect x="147.500" y="4.500" width="15" height="11.500" rx="1" fill="#f4f4f4" stroke="#2e3440" stroke-width="1.200"/><rect x="149.500" y="6.500" width="11" height="7.500" fill="#8fb0e0"/><path d="M153 16v2.500h4V16M151.500 19.300h7" stroke="#555" stroke-width="1.200" fill="none"/>
<!-- grid -->
<rect x="178" y="4.500" width="15.500" height="15.500" fill="#f4f4f4" stroke="#333" stroke-width="1"/><path d="M180.600 4.500v15.500M183.200 4.500v15.500M185.800 4.500v15.500M188.400 4.500v15.500M191 4.500v15.500M178 7.100h15.500M178 9.700h15.500M178 12.300h15.500M178 14.900h15.500M178 17.500h15.500" stroke="#555" stroke-width=".9"/>
<!-- viewports -->
<g fill="#9fb4dc" stroke="#2b4a8c" stroke-width="1.200"><rect x="209.500" y="5.500" width="6.500" height="6" rx=".8"/><rect x="217.500" y="5.500" width="6.500" height="6" rx=".8"/><rect x="209.500" y="13" width="6.500" height="6" rx=".8"/><rect x="217.500" y="13" width="6.500" height="6" rx=".8"/></g>
</svg>
<!-- taskbar -->
<div class="abs" style="left:0;top:1040px;width:1920px;height:8px;background:#111"></div>
<div class="abs" style="left:490px;top:1040px;width:48px;height:8px;background:#353535"></div>
<div class="abs" style="left:1870px;top:1045.500px;width:32px;height:3px;overflow:hidden;color:#fff;font-size:12px;line-height:12px;font-family:'Liberation Sans',sans-serif;white-space:nowrap">21:47</div>

</body></html>
